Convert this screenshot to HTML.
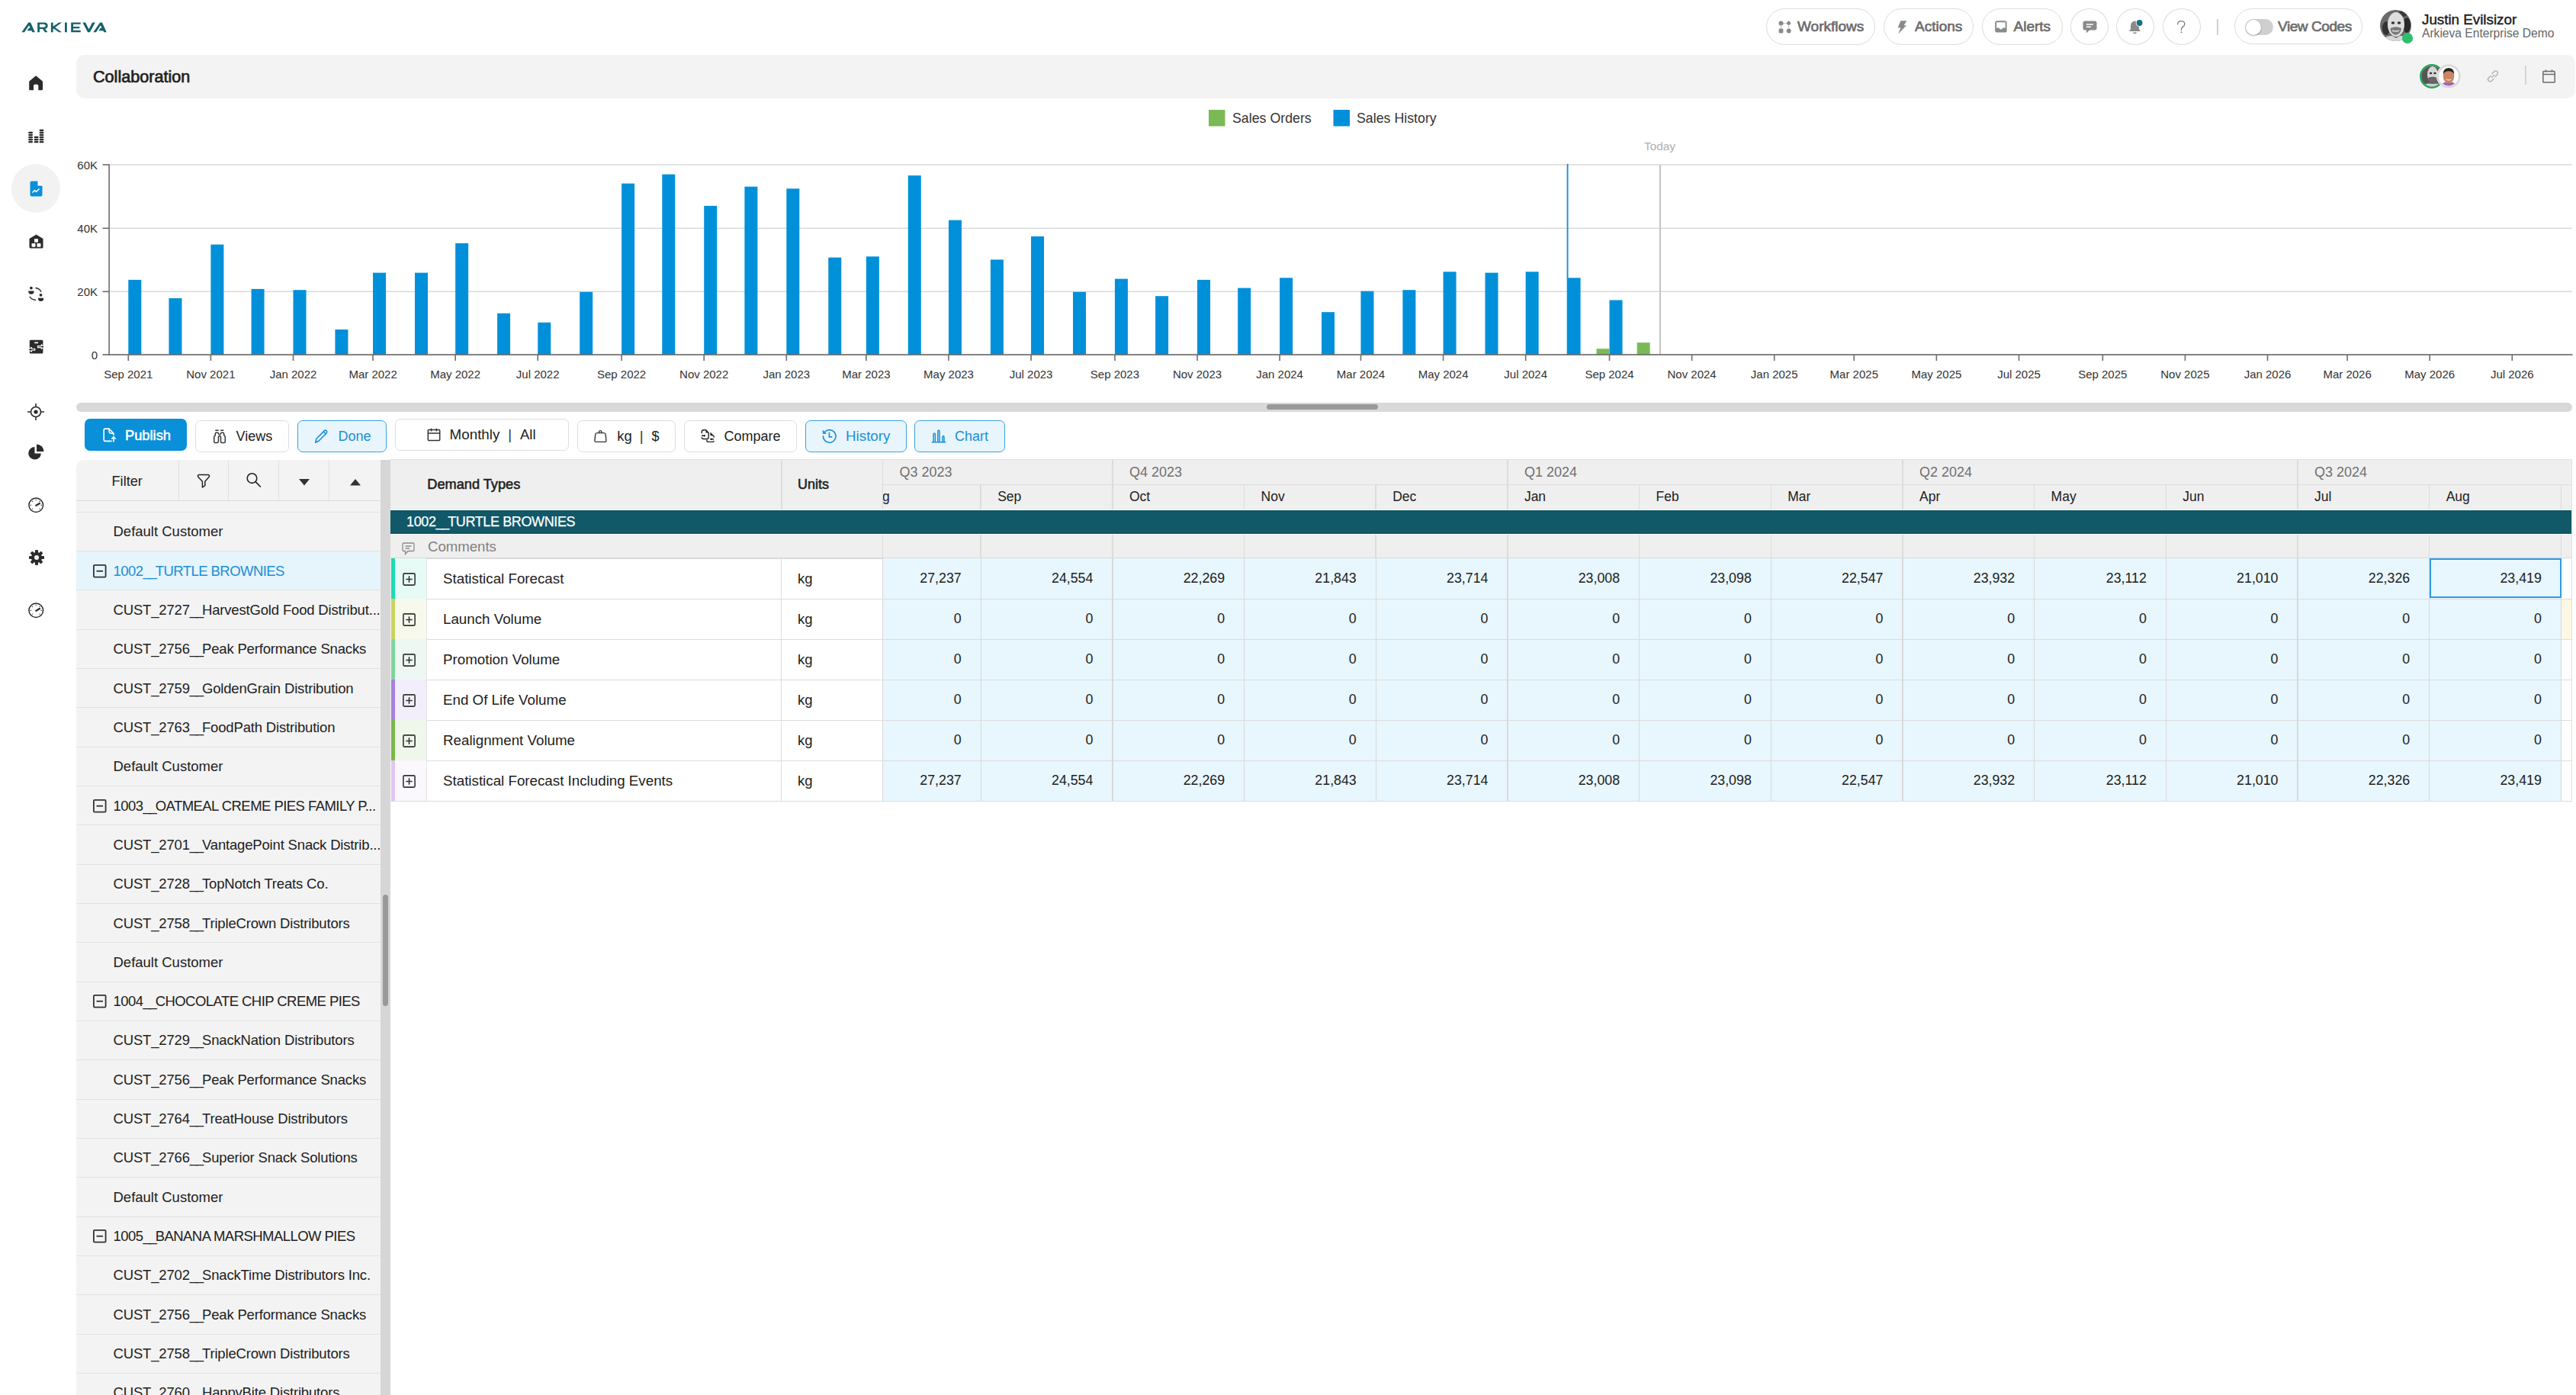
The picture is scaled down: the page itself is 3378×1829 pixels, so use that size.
<!DOCTYPE html><html><head><meta charset="utf-8"><style>
*{box-sizing:border-box;margin:0;padding:0}
html,body{width:3378px;height:1829px;overflow:hidden;background:#fff;font-family:"Liberation Sans",sans-serif;color:#212121}
.a{position:absolute}
.t{position:absolute;white-space:nowrap}
.pill{position:absolute;border:1.5px solid #dcdcdc;border-radius:26px;background:#fff}
.btn{position:absolute;border:1.5px solid #dedede;border-radius:7px;background:#fff}
.btnb{position:absolute;border:1.5px solid #3aa3e0;border-radius:7px;background:#e8f5fc}
svg{position:absolute;overflow:visible}
</style></head><body><svg style="left:24px;top:24px" width="120" height="24" viewBox="0 0 2576 515"><path d="M95 390 L285 118 L345 118 L470 390 L395 390 L300 200 L175 390 Z M245 350 L300 272 L340 272 L390 350 Z M540 118 H720 Q830 118 830 208 Q830 298 720 298 H600 V250 H720 Q768 250 768 208 Q768 168 720 168 H600 V390 H540 Z M680 292 L752 292 L825 390 L750 390 Z M920 118 H980 V390 H920 Z M978 232 L1145 118 L1225 118 L978 300 Z M1030 252 L1225 390 L1145 390 L985 282 Z M1310 118 H1370 V390 H1310 Z M1485 118 H1755 V168 H1545 V235 H1725 V285 H1545 V340 H1755 V390 H1485 Z M1810 118 L1890 118 L1985 305 L2085 118 L2165 118 L2015 390 L1955 390 Z M2110 390 L2300 118 L2360 118 L2485 390 L2410 390 L2315 200 L2190 390 Z M2260 350 L2315 272 L2355 272 L2405 350 Z" fill="#17606e"/></svg>
<div class="pill" style="left:2316px;top:11px;width:143px;height:48px"></div>
<div class="t" style="left:2357px;top:11px;height:48px;line-height:48px;font-size:19px;color:#6b6b6b;font-weight:400;-webkit-text-stroke:0.65px #6b6b6b">Workflows</div>
<div class="pill" style="left:2470px;top:11px;width:118px;height:48px"></div>
<div class="t" style="left:2511px;top:11px;height:48px;line-height:48px;font-size:19px;color:#6b6b6b;font-weight:400;-webkit-text-stroke:0.65px #6b6b6b">Actions</div>
<div class="pill" style="left:2599px;top:11px;width:106px;height:48px"></div>
<div class="t" style="left:2640.5px;top:11px;height:48px;line-height:48px;font-size:19px;color:#6b6b6b;font-weight:400;-webkit-text-stroke:0.65px #6b6b6b">Alerts</div>
<svg style="left:2332px;top:27px" width="17" height="17" viewBox="0 0 17 17"><circle cx="3.5" cy="3.5" r="3" fill="#8a8a8a"/><rect x="11.3" y="1.1" width="4.6" height="4.6" rx="1" transform="rotate(45 13.6 3.4)" fill="#8a8a8a"/><rect x="0.6" y="10.6" width="5.8" height="5.8" rx="1.3" fill="#8a8a8a"/><circle cx="13.7" cy="13.5" r="3" fill="#8a8a8a"/><path d="M7 3.5 H8 M9.3 3.5 H10.3 M3.5 7 V8 M3.5 9.2 V10.2 M13.7 7 V8 M13.7 9.2 V10.2" stroke="#8a8a8a" stroke-width="1"/></svg>
<svg style="left:2488px;top:26.5px" width="13" height="18" viewBox="0 0 13 18"><path d="M4.5 0.3 H12.3 L8.6 6.3 H12 L1.3 17.6 L4.5 9.2 H0.6 Z" fill="#8a8a8a"/></svg>
<svg style="left:2616px;top:27.3px" width="16" height="16" viewBox="0 0 16 16"><rect x="0.2" y="0.2" width="15.4" height="15.4" rx="2.6" fill="#8a8a8a"/><path d="M2.1 2.2 H13.7 V9.6 H10.4 Q9.8 11.6 7.9 11.6 Q6 11.6 5.4 9.6 H2.1 Z" fill="#fff"/></svg>
<div class="pill" style="left:2715px;top:11px;width:50px;height:48px;border-radius:50%"></div>
<div class="pill" style="left:2775px;top:11px;width:50px;height:48px;border-radius:50%"></div>
<div class="pill" style="left:2835.5px;top:11px;width:50px;height:48px;border-radius:50%"></div>
<svg style="left:2731px;top:27px" width="19" height="18" viewBox="0 0 19 18"><path d="M3 0.5 H16 Q18.5 0.5 18.5 3 V10 Q18.5 12.5 16 12.5 H9 L5 16.5 V12.5 H3 Q0.5 12.5 0.5 10 V3 Q0.5 0.5 3 0.5Z" fill="#8a8a8a"/><path d="M5 5 H14 M5 8.3 H11" stroke="#fff" stroke-width="1.5"/></svg>
<svg style="left:2790px;top:24px" width="22" height="22" viewBox="0 0 22 22"><path d="M9.5 3.5 Q4 4.5 4 10 V14 L2 17 H17 L15 14 V10 Q15 4.5 9.5 3.5Z" fill="#8a8a8a"/><path d="M7.5 18.5 Q9.5 20.5 11.5 18.5" stroke="#8a8a8a" stroke-width="1.5" fill="none"/><circle cx="15.6" cy="6" r="4.9" fill="#fff"/><circle cx="15.6" cy="6" r="3.9" fill="#17708a"/></svg>
<svg style="left:2853px;top:26px" width="15" height="20" viewBox="0 0 15 20"><path d="M2.6 5.8 Q2.6 1.6 7.3 1.6 Q11.8 1.6 11.8 5.5 Q11.8 7.6 9.6 9.1 Q7.5 10.5 7.5 12.8 V13.4" stroke="#7a7a7a" stroke-width="1.3" fill="none" stroke-linecap="round"/><circle cx="7.5" cy="16.3" r="1" fill="#7a7a7a"/></svg>
<div class="a" style="left:2907px;top:25px;width:1.5px;height:21px;background:#cfcfcf;"></div>
<div class="pill" style="left:2930px;top:11px;width:168px;height:47px"></div>
<div class="a" style="left:2944px;top:25px;width:37px;height:21px;border-radius:11px;background:#cfcfcf"></div>
<div class="a" style="left:2944.5px;top:25.5px;width:20px;height:20px;border-radius:50%;background:#fff;box-shadow:0 1px 2px rgba(0,0,0,.35)"></div>
<div class="t" style="left:2987px;top:11px;height:48px;line-height:48px;font-size:19px;color:#6b6b6b;font-weight:400;-webkit-text-stroke:0.65px #6b6b6b;letter-spacing:-0.42px">View Codes</div>
<svg style="left:3121px;top:13px" width="41" height="41" viewBox="0 0 41 41"><defs><clipPath id="avc"><circle cx="20.5" cy="20.5" r="20.5"/></clipPath></defs><g clip-path="url(#avc)"><rect width="41" height="41" fill="#6a6a6a"/><ellipse cx="8" cy="24" rx="5" ry="9" fill="#333"/><ellipse cx="35" cy="20" rx="5" ry="10" fill="#2a2a2a"/><ellipse cx="30" cy="5" rx="6" ry="4" fill="#3a3a3a"/><ellipse cx="21" cy="19" rx="11" ry="16" fill="#dedede"/><ellipse cx="17" cy="17" rx="2.3" ry="1.7" fill="#333"/><ellipse cx="25" cy="17" rx="2.3" ry="1.7" fill="#333"/><path d="M13.5 24 Q21 20.5 28 24 Q28 31 20.5 33 Q13.5 31 13.5 24Z" fill="#7a7a7a"/><path d="M16 27 Q21 29 25 27" stroke="#ddd" stroke-width="1.5" fill="none"/><path d="M3 41 Q7 33 16 34 L21 37 L26 34 Q34 33 38 41Z" fill="#d8d8d8"/></g></svg>
<div class="a" style="left:3150px;top:43.3px;width:13.6px;height:13.6px;border-radius:50%;background:#2ebf6e"></div>
<div class="t" style="left:3176px;top:12px;height:27px;line-height:27px;font-size:18.8px;color:#222;font-weight:400;-webkit-text-stroke:0.45px #222">Justin Evilsizor</div>
<div class="t" style="left:3176px;top:32px;height:24px;line-height:24px;font-size:15.6px;color:#666;font-weight:400;">Arkieva Enterprise Demo</div>
<svg style="left:38px;top:99px" width="19" height="20" viewBox="0 0 19 20"><path d="M9.1 0.3 L17.5 7.2 Q18 7.7 18 8.5 V18.3 Q18 19.3 17 19.3 H12.3 V13.5 Q12.3 11.6 9.1 11.6 Q6 11.6 6 13.5 V19.3 H1.2 Q0.2 19.3 0.2 18.3 V8.5 Q0.2 7.7 0.7 7.2 Z" fill="#2b2b2b"/></svg>
<svg style="left:37px;top:169px" width="21" height="19" viewBox="0 0 21 19" fill="#2b2b2b"><rect x="0.2" y="15.90" width="5.8" height="2.3" rx="1"/><rect x="0.2" y="12.86" width="5.8" height="2.3" rx="1"/><rect x="0.2" y="9.82" width="5.8" height="2.3" rx="1"/><rect x="0.2" y="6.78" width="5.8" height="2.3" rx="1"/><rect x="0.2" y="3.74" width="5.8" height="2.3" rx="1"/><rect x="7.7" y="15.90" width="5.8" height="2.3" rx="1"/><rect x="7.7" y="12.86" width="5.8" height="2.3" rx="1"/><rect x="7.7" y="9.82" width="5.8" height="2.3" rx="1"/><rect x="14.6" y="15.90" width="5.8" height="2.3" rx="1"/><rect x="14.6" y="12.86" width="5.8" height="2.3" rx="1"/><rect x="14.6" y="9.82" width="5.8" height="2.3" rx="1"/><rect x="14.6" y="6.78" width="5.8" height="2.3" rx="1"/><rect x="14.6" y="3.74" width="5.8" height="2.3" rx="1"/><rect x="14.6" y="0.70" width="5.8" height="2.3" rx="1"/></svg>
<div class="a" style="left:15px;top:215px;width:64px;height:64px;border-radius:50%;background:#f2f2f2"></div>
<svg style="left:39px;top:237px" width="17" height="21" viewBox="0 0 17 21"><path d="M2.5 0.5 H10 L16.5 7 V18.5 Q16.5 20.5 14.5 20.5 H2.5 Q0.5 20.5 0.5 18.5 V2.5 Q0.5 0.5 2.5 0.5Z" fill="#0a90da"/><path d="M10.5 0.5 V6.5 H16.5" fill="#fff"/><path d="M11 0 L17 6 H11Z" fill="#fff"/><path d="M3.5 15.5 L6.5 12.5 L8.5 14.5 L12.5 10.5" stroke="#fff" stroke-width="1.6" fill="none" stroke-linejoin="round"/></svg>
<svg style="left:38px;top:307px" width="19" height="19" viewBox="0 0 19 19"><path d="M9.5 0.5 L18.5 6 V17 Q18.5 18.5 17 18.5 H2 Q0.5 18.5 0.5 17 V6 Z" fill="#2b2b2b"/><rect x="7" y="6" width="5" height="4.8" rx="0.8" fill="#fff"/><rect x="3.5" y="12" width="5" height="4.8" rx="0.8" fill="#fff"/><rect x="10.5" y="12" width="5" height="4.8" rx="0.8" fill="#fff"/></svg>
<svg style="left:37px;top:376px" width="22" height="21" viewBox="0 0 22 21"><circle cx="3.9" cy="1.6" r="1.9" fill="#2b2b2b"/><path d="M0.2 5.5 H7.6 Q7.6 9.8 3.9 9.8 Q0.2 9.8 0.2 5.5Z" fill="#2b2b2b"/><circle cx="16.5" cy="10.8" r="1.9" fill="#2b2b2b"/><path d="M12.9 14.8 H20.3 Q20.3 19.1 16.6 19.1 Q12.9 19.1 12.9 14.8Z" fill="#2b2b2b"/><path d="M9.4 1.5 Q15 1.9 17 6.8 M2 12.8 Q4 17 10 17.4" stroke="#2b2b2b" stroke-width="1.5" fill="none"/></svg>
<svg style="left:35px;top:444px" width="25" height="21" viewBox="0 0 25 21"><rect x="3.8" y="1.7" width="17.6" height="17.7" rx="1.5" fill="#2b2b2b"/><rect x="10.2" y="4.5" width="4.8" height="1.7" fill="#fff"/><path d="M14.4 9.6 H19.3 V7.8 L23.3 10.6 L19.3 13.4 V11.6 H14.4 Z M10.8 13.3 H6.5 V11.5 L1.4 14.3 L6.5 17.1 V15.3 H10.8 Z" fill="#2b2b2b" stroke="#fff" stroke-width="1.1" stroke-linejoin="round"/></svg>
<svg style="left:35.5px;top:528.5px" width="22" height="22" viewBox="0 0 22 22"><circle cx="11" cy="11" r="6.5" stroke="#2b2b2b" stroke-width="1.6" fill="none"/><circle cx="11" cy="11" r="2.6" fill="#2b2b2b"/><path d="M11 0 V4.5 M11 17.5 V22 M0 11 H4.5 M17.5 11 H22" stroke="#2b2b2b" stroke-width="1.6"/></svg>
<svg style="left:37px;top:581.5px" width="21" height="21" viewBox="0 0 21 21"><path d="M8.5 4 A8.3 8.3 0 1 0 16.8 12.5 H8.5Z" fill="#2b2b2b"/><path d="M11 0.5 A9.5 9.5 0 0 1 20.5 10 H11Z" fill="#2b2b2b"/></svg>
<svg style="left:37px;top:651.5px" width="20.5" height="20.5" viewBox="0 0 20.5 20.5"><circle cx="10.25" cy="10.25" r="9.3" stroke="#2b2b2b" stroke-width="1.5" fill="none"/><path d="M10.25 10.8 L15 8" stroke="#2b2b2b" stroke-width="2.2" stroke-linecap="round"/><g fill="#2b2b2b"><circle cx="10.25" cy="3.4" r="0.7"/><circle cx="3.4" cy="10.25" r="0.7"/><circle cx="17.1" cy="10.25" r="0.7"/><circle cx="5.4" cy="5.4" r="0.7"/><circle cx="15.1" cy="5.4" r="0.7"/><circle cx="5.4" cy="15.1" r="0.7"/><circle cx="15.1" cy="15.1" r="0.7"/></g></svg>
<svg style="left:37px;top:790px" width="20.5" height="20.5" viewBox="0 0 20.5 20.5"><circle cx="10.25" cy="10.25" r="9.3" stroke="#2b2b2b" stroke-width="1.5" fill="none"/><path d="M10.25 10.8 L15 8" stroke="#2b2b2b" stroke-width="2.2" stroke-linecap="round"/><g fill="#2b2b2b"><circle cx="10.25" cy="3.4" r="0.7"/><circle cx="3.4" cy="10.25" r="0.7"/><circle cx="17.1" cy="10.25" r="0.7"/><circle cx="5.4" cy="5.4" r="0.7"/><circle cx="15.1" cy="5.4" r="0.7"/><circle cx="5.4" cy="15.1" r="0.7"/><circle cx="15.1" cy="15.1" r="0.7"/></g></svg>
<svg style="left:37.5px;top:721px" width="20" height="20" viewBox="0 0 20 20" fill="#2b2b2b"><rect x="8" y="0" width="4" height="5" rx="1" transform="rotate(0 10 10)"/><rect x="8" y="0" width="4" height="5" rx="1" transform="rotate(45 10 10)"/><rect x="8" y="0" width="4" height="5" rx="1" transform="rotate(90 10 10)"/><rect x="8" y="0" width="4" height="5" rx="1" transform="rotate(135 10 10)"/><rect x="8" y="0" width="4" height="5" rx="1" transform="rotate(180 10 10)"/><rect x="8" y="0" width="4" height="5" rx="1" transform="rotate(225 10 10)"/><rect x="8" y="0" width="4" height="5" rx="1" transform="rotate(270 10 10)"/><rect x="8" y="0" width="4" height="5" rx="1" transform="rotate(315 10 10)"/><circle cx="10" cy="10" r="7"/><circle cx="10" cy="10" r="3" fill="#fff"/></svg>
<div class="a" style="left:100px;top:72px;width:3277px;height:57px;border-radius:11px;background:#f3f3f3"></div>
<div class="t" style="left:122px;top:72px;height:57px;line-height:57px;font-size:21.6px;color:#212121;font-weight:400;-webkit-text-stroke:0.7px #212121">Collaboration</div>
<svg style="left:3170px;top:81px" width="60" height="38" viewBox="0 0 60 38"><defs><clipPath id="av1"><circle cx="19" cy="19" r="13.6"/></clipPath><clipPath id="av2"><circle cx="41" cy="19" r="12.5"/></clipPath></defs><circle cx="19" cy="19" r="16.5" fill="#fff"/><circle cx="19" cy="19" r="14.7" stroke="#1fa85a" stroke-width="2.6" fill="none"/><g clip-path="url(#av1)"><rect x="5" y="5" width="28" height="28" fill="#555"/><ellipse cx="20" cy="17" rx="7" ry="11" fill="#d6d6d6"/><ellipse cx="17.5" cy="15" rx="1.8" ry="1.3" fill="#333"/><ellipse cx="23" cy="15" rx="1.8" ry="1.3" fill="#333"/><path d="M14 21 Q20 18 26 21 Q26 28 20 29 Q14 28 14 21Z" fill="#666"/><path d="M6 33 Q10 27 20 29 Q29 27 33 33Z" fill="#cfcfcf"/></g><circle cx="41" cy="19" r="16" fill="#f3f3f3"/><circle cx="41" cy="19" r="14.3" stroke="#d8d8d8" stroke-width="2.5" fill="#fff"/><g clip-path="url(#av2)"><rect x="28" y="6" width="26" height="26" fill="#fff"/><path d="M29 34 Q31 26.5 41 26 Q51 26.5 53 34Z" fill="#9a62c8"/><ellipse cx="41" cy="19" rx="7.2" ry="9.3" fill="#c98660"/><path d="M33.8 17 Q33.3 8.3 41 8 Q48.7 8.3 48.2 17 Q47 12.2 41 12.2 Q35 12.2 33.8 17Z" fill="#2a2220"/><path d="M37.7 23 Q41 25 44.3 23" stroke="#f0d8d0" stroke-width="1.3" fill="none"/></g></svg>
<svg style="left:3260px;top:91px" width="18" height="18" viewBox="0 0 18 18"><path d="M7.5 10.5 L10.5 7.5 M6 8.5 L3.5 11 Q1.5 13 3.5 15 Q5.5 17 7.5 15 L10 12.5 M8 5.5 L10.5 3 Q12.5 1 14.5 3 Q16.5 5 14.5 7 L12 9.5" stroke="#b5b5b5" stroke-width="1.6" fill="none" stroke-linecap="round"/></svg>
<div class="a" style="left:3311px;top:86px;width:1.5px;height:25px;background:#d4d4d4;"></div>
<svg style="left:3334px;top:91px" width="17" height="18" viewBox="0 0 17 18"><rect x="0.8" y="2.5" width="15.4" height="14.5" rx="0.8" stroke="#6b6b6b" stroke-width="1.5" fill="none"/><path d="M0.8 6.5 H16.2 M4.5 0.5 V3.5 M12.5 0.5 V3.5" stroke="#6b6b6b" stroke-width="1.5"/></svg>
<svg style="left:0;top:0" width="3378" height="560" viewBox="0 0 3378 560"><rect x="143" y="215.25" width="3230" height="1.5" fill="#d9d9d9"/><rect x="143" y="298.55" width="3230" height="1.5" fill="#d9d9d9"/><rect x="143" y="381.55" width="3230" height="1.5" fill="#d9d9d9"/><rect x="2176" y="216" width="2" height="249" fill="#c4c4c4"/><rect x="168.30" y="366.9" width="17" height="98.1" fill="#0090da"/><rect x="221.46" y="391" width="17" height="74.0" fill="#0090da"/><rect x="276.40" y="320.6" width="17" height="144.4" fill="#0090da"/><rect x="329.56" y="378.9" width="17" height="86.1" fill="#0090da"/><rect x="384.50" y="380.2" width="17" height="84.8" fill="#0090da"/><rect x="439.43" y="432" width="17" height="33.0" fill="#0090da"/><rect x="489.05" y="357.6" width="17" height="107.4" fill="#0090da"/><rect x="543.99" y="357.6" width="17" height="107.4" fill="#0090da"/><rect x="597.15" y="318.9" width="17" height="146.1" fill="#0090da"/><rect x="652.08" y="410.8" width="17" height="54.2" fill="#0090da"/><rect x="705.25" y="422.8" width="17" height="42.2" fill="#0090da"/><rect x="760.18" y="382.8" width="17" height="82.2" fill="#0090da"/><rect x="815.12" y="240.6" width="17" height="224.4" fill="#0090da"/><rect x="868.28" y="228.6" width="17" height="236.4" fill="#0090da"/><rect x="923.21" y="269.9" width="17" height="195.1" fill="#0090da"/><rect x="976.38" y="244.7" width="17" height="220.3" fill="#0090da"/><rect x="1031.31" y="247.3" width="17" height="217.7" fill="#0090da"/><rect x="1086.25" y="337.6" width="17" height="127.4" fill="#0090da"/><rect x="1135.87" y="336.3" width="17" height="128.7" fill="#0090da"/><rect x="1190.80" y="230.1" width="17" height="234.9" fill="#0090da"/><rect x="1243.96" y="288.6" width="17" height="176.4" fill="#0090da"/><rect x="1298.90" y="340.4" width="17" height="124.6" fill="#0090da"/><rect x="1352.06" y="309.9" width="17" height="155.1" fill="#0090da"/><rect x="1407.00" y="382.8" width="17" height="82.2" fill="#0090da"/><rect x="1461.93" y="365.6" width="17" height="99.4" fill="#0090da"/><rect x="1515.10" y="388.2" width="17" height="76.8" fill="#0090da"/><rect x="1570.03" y="366.9" width="17" height="98.1" fill="#0090da"/><rect x="1623.19" y="377.6" width="17" height="87.4" fill="#0090da"/><rect x="1678.13" y="364.3" width="17" height="100.7" fill="#0090da"/><rect x="1733.06" y="409.2" width="17" height="55.8" fill="#0090da"/><rect x="1784.46" y="381.7" width="17" height="83.3" fill="#0090da"/><rect x="1839.39" y="380.2" width="17" height="84.8" fill="#0090da"/><rect x="1892.55" y="356.3" width="17" height="108.7" fill="#0090da"/><rect x="1947.49" y="357.6" width="17" height="107.4" fill="#0090da"/><rect x="2000.65" y="356.3" width="17" height="108.7" fill="#0090da"/><rect x="2055.59" y="364.3" width="17" height="100.7" fill="#0090da"/><rect x="2110.52" y="393.5" width="17" height="71.5" fill="#0090da"/><rect x="2093.52" y="457.2" width="17" height="7.8" fill="#7aba55"/><rect x="2146.68" y="449.2" width="17" height="15.8" fill="#7aba55"/><rect x="2054.69" y="215" width="1.8" height="251" fill="#0a90da"/><rect x="142.3" y="215.5" width="1.6" height="250" fill="#6e6e6e"/><rect x="134.5" y="464.2" width="3239" height="1.7" fill="#6e6e6e"/><rect x="134.5" y="215.2" width="9" height="1.6" fill="#6e6e6e"/><rect x="134.5" y="298.5" width="9" height="1.6" fill="#6e6e6e"/><rect x="134.5" y="381.5" width="9" height="1.6" fill="#6e6e6e"/><text x="128" y="221.5" text-anchor="end" font-family="Liberation Sans" font-size="15" fill="#333">60K</text><text x="128" y="304.8" text-anchor="end" font-family="Liberation Sans" font-size="15" fill="#333">40K</text><text x="128" y="387.8" text-anchor="end" font-family="Liberation Sans" font-size="15" fill="#333">20K</text><text x="128" y="470.5" text-anchor="end" font-family="Liberation Sans" font-size="15" fill="#333">0</text><rect x="167.50" y="465" width="1.6" height="8" fill="#6e6e6e"/><text x="168.3" y="495.5" text-anchor="middle" font-family="Liberation Sans" font-size="15" fill="#333">Sep 2021</text><rect x="275.60" y="465" width="1.6" height="8" fill="#6e6e6e"/><text x="276.4" y="495.5" text-anchor="middle" font-family="Liberation Sans" font-size="15" fill="#333">Nov 2021</text><rect x="383.70" y="465" width="1.6" height="8" fill="#6e6e6e"/><text x="384.5" y="495.5" text-anchor="middle" font-family="Liberation Sans" font-size="15" fill="#333">Jan 2022</text><rect x="488.25" y="465" width="1.6" height="8" fill="#6e6e6e"/><text x="489.1" y="495.5" text-anchor="middle" font-family="Liberation Sans" font-size="15" fill="#333">Mar 2022</text><rect x="596.35" y="465" width="1.6" height="8" fill="#6e6e6e"/><text x="597.1" y="495.5" text-anchor="middle" font-family="Liberation Sans" font-size="15" fill="#333">May 2022</text><rect x="704.45" y="465" width="1.6" height="8" fill="#6e6e6e"/><text x="705.2" y="495.5" text-anchor="middle" font-family="Liberation Sans" font-size="15" fill="#333">Jul 2022</text><rect x="814.32" y="465" width="1.6" height="8" fill="#6e6e6e"/><text x="815.1" y="495.5" text-anchor="middle" font-family="Liberation Sans" font-size="15" fill="#333">Sep 2022</text><rect x="922.41" y="465" width="1.6" height="8" fill="#6e6e6e"/><text x="923.2" y="495.5" text-anchor="middle" font-family="Liberation Sans" font-size="15" fill="#333">Nov 2022</text><rect x="1030.51" y="465" width="1.6" height="8" fill="#6e6e6e"/><text x="1031.3" y="495.5" text-anchor="middle" font-family="Liberation Sans" font-size="15" fill="#333">Jan 2023</text><rect x="1135.07" y="465" width="1.6" height="8" fill="#6e6e6e"/><text x="1135.9" y="495.5" text-anchor="middle" font-family="Liberation Sans" font-size="15" fill="#333">Mar 2023</text><rect x="1243.16" y="465" width="1.6" height="8" fill="#6e6e6e"/><text x="1244.0" y="495.5" text-anchor="middle" font-family="Liberation Sans" font-size="15" fill="#333">May 2023</text><rect x="1351.26" y="465" width="1.6" height="8" fill="#6e6e6e"/><text x="1352.1" y="495.5" text-anchor="middle" font-family="Liberation Sans" font-size="15" fill="#333">Jul 2023</text><rect x="1461.13" y="465" width="1.6" height="8" fill="#6e6e6e"/><text x="1461.9" y="495.5" text-anchor="middle" font-family="Liberation Sans" font-size="15" fill="#333">Sep 2023</text><rect x="1569.23" y="465" width="1.6" height="8" fill="#6e6e6e"/><text x="1570.0" y="495.5" text-anchor="middle" font-family="Liberation Sans" font-size="15" fill="#333">Nov 2023</text><rect x="1677.33" y="465" width="1.6" height="8" fill="#6e6e6e"/><text x="1678.1" y="495.5" text-anchor="middle" font-family="Liberation Sans" font-size="15" fill="#333">Jan 2024</text><rect x="1783.66" y="465" width="1.6" height="8" fill="#6e6e6e"/><text x="1784.5" y="495.5" text-anchor="middle" font-family="Liberation Sans" font-size="15" fill="#333">Mar 2024</text><rect x="1891.75" y="465" width="1.6" height="8" fill="#6e6e6e"/><text x="1892.6" y="495.5" text-anchor="middle" font-family="Liberation Sans" font-size="15" fill="#333">May 2024</text><rect x="1999.85" y="465" width="1.6" height="8" fill="#6e6e6e"/><text x="2000.7" y="495.5" text-anchor="middle" font-family="Liberation Sans" font-size="15" fill="#333">Jul 2024</text><rect x="2109.72" y="465" width="1.6" height="8" fill="#6e6e6e"/><text x="2110.5" y="495.5" text-anchor="middle" font-family="Liberation Sans" font-size="15" fill="#333">Sep 2024</text><rect x="2217.82" y="465" width="1.6" height="8" fill="#6e6e6e"/><text x="2218.6" y="495.5" text-anchor="middle" font-family="Liberation Sans" font-size="15" fill="#333">Nov 2024</text><rect x="2325.92" y="465" width="1.6" height="8" fill="#6e6e6e"/><text x="2326.7" y="495.5" text-anchor="middle" font-family="Liberation Sans" font-size="15" fill="#333">Jan 2025</text><rect x="2430.47" y="465" width="1.6" height="8" fill="#6e6e6e"/><text x="2431.3" y="495.5" text-anchor="middle" font-family="Liberation Sans" font-size="15" fill="#333">Mar 2025</text><rect x="2538.57" y="465" width="1.6" height="8" fill="#6e6e6e"/><text x="2539.4" y="495.5" text-anchor="middle" font-family="Liberation Sans" font-size="15" fill="#333">May 2025</text><rect x="2646.67" y="465" width="1.6" height="8" fill="#6e6e6e"/><text x="2647.5" y="495.5" text-anchor="middle" font-family="Liberation Sans" font-size="15" fill="#333">Jul 2025</text><rect x="2756.54" y="465" width="1.6" height="8" fill="#6e6e6e"/><text x="2757.3" y="495.5" text-anchor="middle" font-family="Liberation Sans" font-size="15" fill="#333">Sep 2025</text><rect x="2864.64" y="465" width="1.6" height="8" fill="#6e6e6e"/><text x="2865.4" y="495.5" text-anchor="middle" font-family="Liberation Sans" font-size="15" fill="#333">Nov 2025</text><rect x="2972.73" y="465" width="1.6" height="8" fill="#6e6e6e"/><text x="2973.5" y="495.5" text-anchor="middle" font-family="Liberation Sans" font-size="15" fill="#333">Jan 2026</text><rect x="3077.29" y="465" width="1.6" height="8" fill="#6e6e6e"/><text x="3078.1" y="495.5" text-anchor="middle" font-family="Liberation Sans" font-size="15" fill="#333">Mar 2026</text><rect x="3185.39" y="465" width="1.6" height="8" fill="#6e6e6e"/><text x="3186.2" y="495.5" text-anchor="middle" font-family="Liberation Sans" font-size="15" fill="#333">May 2026</text><rect x="3293.48" y="465" width="1.6" height="8" fill="#6e6e6e"/><text x="3294.3" y="495.5" text-anchor="middle" font-family="Liberation Sans" font-size="15" fill="#333">Jul 2026</text><rect x="1585" y="144" width="21.5" height="21.5" fill="#7aba55"/><text x="1616" y="161.3" font-family="Liberation Sans" font-size="17.8" fill="#333">Sales Orders</text><rect x="1748.5" y="144" width="21.5" height="21.5" fill="#0090da"/><text x="1779" y="161.3" font-family="Liberation Sans" font-size="17.8" fill="#333">Sales History</text><text x="2176.5" y="196.5" text-anchor="middle" font-family="Liberation Sans" font-size="15.4" fill="#b0b0b0">Today</text></svg>
<div class="a" style="left:100px;top:528px;width:3273px;height:12px;background:#d9d9d9;border-radius:6px"></div>
<div class="a" style="left:1660.5px;top:530.3px;width:146px;height:6.8px;background:#999;border-radius:3.4px"></div>
<div class="a" style="left:111px;top:549px;width:134px;height:42px;border-radius:7px;background:#0a8fd9"></div>
<svg style="left:127px;top:554px" width="32" height="32" viewBox="0 0 32 32"><path d="M19.7 24.4 H11.2 Q9.2 24.4 9.2 22.4 V10.1 Q9.2 8.1 11.2 8.1 H16 L22 14.2 V16.8 M16 8.3 V11 Q16 14.3 19.3 14.3 H21.8" stroke="#fff" stroke-width="1.6" fill="none" stroke-linejoin="round"/><path d="M22 25.5 V19.8 M19.3 21.5 L22 18.7 L24.7 21.5" stroke="#fff" stroke-width="1.7" fill="none"/></svg>
<div class="t" style="left:164px;top:550.2px;height:42px;line-height:42px;font-size:18.3px;color:#fff;font-weight:400;-webkit-text-stroke:0.5px #fff">Publish</div>
<div class="btn" style="left:256px;top:551px;width:122.5px;height:42px"></div>
<svg style="left:272px;top:556px" width="32" height="32" viewBox="0 0 32 32"><path d="M10.3 8.3 H14.7 M17.1 8.3 H21.3" stroke="#333" stroke-width="1.5"/><path d="M8.7 23 V17 Q8.7 15.8 10.3 14.6 V12.6 Q10.3 11.2 12 11.2 H13 Q14.3 11.2 14.6 12.5 Q15 13.6 16 13.6 Q17 13.6 17.4 12.5 Q17.7 11.2 19 11.2 H20 Q21.7 11.2 21.7 12.6 V14.6 Q23.3 15.8 23.3 17 V23 Q23.3 24.4 22 24.4 H18.8 Q17.5 24.4 17.5 23 V17 Q17.5 15.6 16 15.6 Q14.4 15.6 14.4 17 V23 Q14.4 24.4 13.1 24.4 H10 Q8.7 24.4 8.7 23 Z" stroke="#333" stroke-width="1.5" fill="none"/></svg>
<div class="t" style="left:309.5px;top:551px;height:42px;line-height:42px;font-size:18px;color:#212121;font-weight:400;">Views</div>
<div class="btnb" style="left:390px;top:551px;width:116.5px;height:42px"></div>
<svg style="left:405px;top:556px" width="32" height="32" viewBox="0 0 32 32"><path d="M8.7 24.2 L9.9 19.2 L20.2 8.9 Q21.7 7.5 23.2 8.8 Q24.6 10.3 23.3 11.8 L13.1 22 Z M19.3 10 L22.2 12.9" stroke="#1a8fd6" stroke-width="1.6" fill="none" stroke-linejoin="round"/></svg>
<div class="t" style="left:443.5px;top:551px;height:42px;line-height:42px;font-size:18px;color:#1a8fd6;font-weight:400;">Done</div>
<div class="btn" style="left:517.5px;top:549px;width:228px;height:42px"></div>
<svg style="left:553px;top:554px" width="32" height="32" viewBox="0 0 32 32"><rect x="8.3" y="9.6" width="15.4" height="13.8" rx="0.8" stroke="#333" stroke-width="1.5" fill="none"/><path d="M8.3 14 H23.7 M12.5 7.8 V11.5 M19.4 7.8 V11.5" stroke="#333" stroke-width="1.5"/></svg>
<div class="t" style="left:589.6px;top:549px;height:42px;line-height:42px;font-size:18.8px;color:#212121;font-weight:400;">Monthly</div>
<div class="t" style="left:666.3px;top:549px;height:42px;line-height:42px;font-size:18.5px;color:#333;font-weight:400;">|</div>
<div class="t" style="left:682px;top:549px;height:42px;line-height:42px;font-size:18.5px;color:#212121;font-weight:400;">All</div>
<div class="btn" style="left:756.5px;top:551px;width:129px;height:42px"></div>
<svg style="left:771px;top:556px" width="32" height="32" viewBox="0 0 32 32"><path d="M12 11.6 H21 Q22.9 11.6 23.1 13.5 L23.9 21.5 Q24 23.4 22.1 23.4 H10.7 Q8.7 23.4 8.9 21.4 L9.8 13.5 Q10 11.6 12 11.6 Z M14.6 11.6 V10.6 Q14.6 8.6 16.2 8.6 Q17.8 8.6 17.8 10.6 V11.6" stroke="#333" stroke-width="1.4" fill="none"/></svg>
<div class="t" style="left:809.3px;top:551px;height:42px;line-height:42px;font-size:18.5px;color:#212121;font-weight:400;">kg</div>
<div class="t" style="left:838.8px;top:551px;height:42px;line-height:42px;font-size:18.5px;color:#333;font-weight:400;">|</div>
<div class="t" style="left:854.5px;top:551px;height:42px;line-height:42px;font-size:18px;color:#212121;font-weight:400;">$</div>
<div class="btn" style="left:896.5px;top:551px;width:148px;height:42px"></div>
<svg style="left:912px;top:556px" width="32" height="32" viewBox="0 0 32 32"><path d="M8.3 12.3 V10 Q8.3 7.8 10.5 7.8 H13.6 L17.2 11.5 V17.3 Q17.2 19.5 15 19.5 H10.5 Q8.3 19.5 8.3 17.3 V17.2" stroke="#222" stroke-width="1.4" fill="none"/><path d="M13.5 8 V11.6 H17.1 Z M19.5 11.5 V15.3 H23.4 Z" fill="#222"/><path d="M19.5 11.5 L24.3 16.2 V17.5 M24.3 22 Q24 23.4 22 23.4 H17 Q14.9 23.4 14.9 21.2 V20.5 M8 15.2 H12 M20.2 19.7 H24" stroke="#222" stroke-width="1.4" fill="none"/><circle cx="11.8" cy="15.2" r="1.2" fill="#222"/><circle cx="20.4" cy="19.7" r="1.2" fill="#222"/></svg>
<div class="t" style="left:949.5px;top:551px;height:42px;line-height:42px;font-size:18px;color:#212121;font-weight:400;">Compare</div>
<div class="btnb" style="left:1055.5px;top:551px;width:133px;height:42px"></div>
<svg style="left:1071px;top:556px" width="32" height="32" viewBox="0 0 32 32"><path d="M8.4 15.8 A8.3 8.3 0 1 0 10.9 10" stroke="#1a8fd6" stroke-width="1.6" fill="none" stroke-linecap="round"/><path d="M8 8.3 L8.4 12.6 L12.4 12.4 Z" fill="#1a8fd6" stroke="#1a8fd6" stroke-width="0.8" stroke-linejoin="round"/><path d="M16.4 11.4 V16.9 H19.7" stroke="#1a8fd6" stroke-width="1.6" fill="none" stroke-linecap="round"/></svg>
<div class="t" style="left:1109px;top:551px;height:42px;line-height:42px;font-size:18.8px;color:#1a8fd6;font-weight:400;">History</div>
<div class="btnb" style="left:1199px;top:551px;width:118.5px;height:42px"></div>
<svg style="left:1214px;top:556px" width="32" height="32" viewBox="0 0 32 32"><path d="M8.3 23.7 H25.7" stroke="#1a8fd6" stroke-width="1.6" stroke-linecap="round"/><path d="M10.1 23.5 V13.8 Q10.1 12 11.25 12 Q12.4 12 12.4 13.8 V23.5 M15.8 23.5 V9.9 Q15.8 8.1 16.95 8.1 Q18.1 8.1 18.1 9.9 V23.5 M21.8 23.5 V17.3 Q21.8 15.5 22.9 15.5 Q24 15.5 24 17.3 V23.5" stroke="#1a8fd6" stroke-width="1.5" fill="none"/></svg>
<div class="t" style="left:1252px;top:551px;height:42px;line-height:42px;font-size:18px;color:#1a8fd6;font-weight:400;">Chart</div>
<div class="a" style="left:100px;top:602.5px;width:398.5px;height:1240px;background:#f3f3f3;border-top-left-radius:11px"></div>
<div class="a" style="left:498.5px;top:602.5px;width:13.5px;height:1240px;background:#d6d6d6;"></div>
<div class="a" style="left:501.5px;top:1173.3px;width:7.8px;height:145.5px;background:#999;border-radius:4px"></div>
<div class="a" style="left:100px;top:655.5px;width:398.5px;height:1.2px;background:#dcdcdc;"></div>
<div class="a" style="left:233.6px;top:603px;width:1.2px;height:53px;background:#e0e0e0;"></div>
<div class="a" style="left:299.3px;top:603px;width:1.2px;height:53px;background:#e0e0e0;"></div>
<div class="a" style="left:365.3px;top:603px;width:1.2px;height:53px;background:#e0e0e0;"></div>
<div class="a" style="left:431.3px;top:603px;width:1.2px;height:53px;background:#e0e0e0;"></div>
<div class="t" style="left:146.5px;top:605px;height:53px;line-height:53px;font-size:18.2px;color:#212121;font-weight:400;">Filter</div>
<svg style="left:250px;top:613px" width="32" height="32" viewBox="0 0 32 32"><path d="M10.9 9.6 H23 Q25.4 9.9 24 12.5 L18.8 18.3 V23.6 L15.4 26 V18.3 L10 12.5 Q8.6 9.9 10.9 9.6 Z" stroke="#222" stroke-width="1.5" fill="none" stroke-linejoin="round"/></svg>
<svg style="left:317px;top:613px" width="32" height="32" viewBox="0 0 32 32"><circle cx="13.5" cy="14.1" r="6.3" stroke="#222" stroke-width="1.6" fill="none"/><path d="M18.3 18.9 L24.4 25" stroke="#222" stroke-width="1.7" stroke-linecap="round"/></svg>
<svg style="left:391.5px;top:628px" width="14" height="9" viewBox="0 0 14 9"><path d="M0 0 H14 L7 8.5Z" fill="#333"/></svg>
<svg style="left:458.5px;top:627.5px" width="14" height="9" viewBox="0 0 14 9"><path d="M0 8.5 H14 L7 0Z" fill="#333"/></svg>
<div class="a" style="left:100px;top:670.7px;width:398.5px;height:1.1px;background:#e2e2e2;"></div>
<div class="a" style="left:100px;top:722.0300000000001px;width:398.5px;height:1.1px;background:#e2e2e2;"></div>
<div class="a" style="left:100px;top:723.0300000000001px;width:398.5px;height:50.33px;background:#e6f4fc;"></div>
<div class="a" style="left:100px;top:773.3600000000001px;width:398.5px;height:1.1px;background:#e2e2e2;"></div>
<div class="a" style="left:100px;top:824.69px;width:398.5px;height:1.1px;background:#e2e2e2;"></div>
<div class="a" style="left:100px;top:876.0200000000001px;width:398.5px;height:1.1px;background:#e2e2e2;"></div>
<div class="a" style="left:100px;top:927.35px;width:398.5px;height:1.1px;background:#e2e2e2;"></div>
<div class="a" style="left:100px;top:978.6800000000001px;width:398.5px;height:1.1px;background:#e2e2e2;"></div>
<div class="a" style="left:100px;top:1030.01px;width:398.5px;height:1.1px;background:#e2e2e2;"></div>
<div class="a" style="left:100px;top:1081.34px;width:398.5px;height:1.1px;background:#e2e2e2;"></div>
<div class="a" style="left:100px;top:1132.67px;width:398.5px;height:1.1px;background:#e2e2e2;"></div>
<div class="a" style="left:100px;top:1184.0px;width:398.5px;height:1.1px;background:#e2e2e2;"></div>
<div class="a" style="left:100px;top:1235.33px;width:398.5px;height:1.1px;background:#e2e2e2;"></div>
<div class="a" style="left:100px;top:1286.6599999999999px;width:398.5px;height:1.1px;background:#e2e2e2;"></div>
<div class="a" style="left:100px;top:1337.99px;width:398.5px;height:1.1px;background:#e2e2e2;"></div>
<div class="a" style="left:100px;top:1389.32px;width:398.5px;height:1.1px;background:#e2e2e2;"></div>
<div class="a" style="left:100px;top:1440.65px;width:398.5px;height:1.1px;background:#e2e2e2;"></div>
<div class="a" style="left:100px;top:1491.98px;width:398.5px;height:1.1px;background:#e2e2e2;"></div>
<div class="a" style="left:100px;top:1543.31px;width:398.5px;height:1.1px;background:#e2e2e2;"></div>
<div class="a" style="left:100px;top:1594.6399999999999px;width:398.5px;height:1.1px;background:#e2e2e2;"></div>
<div class="a" style="left:100px;top:1645.9699999999998px;width:398.5px;height:1.1px;background:#e2e2e2;"></div>
<div class="a" style="left:100px;top:1697.3px;width:398.5px;height:1.1px;background:#e2e2e2;"></div>
<div class="a" style="left:100px;top:1748.6299999999999px;width:398.5px;height:1.1px;background:#e2e2e2;"></div>
<div class="a" style="left:100px;top:1799.96px;width:398.5px;height:1.1px;background:#e2e2e2;"></div>
<div class="a" style="left:100px;top:1851.29px;width:398.5px;height:1.1px;background:#e2e2e2;"></div>
<div class="a" style="left:100px;top:656px;width:398px;height:1180px;overflow:hidden">
<div class="t" style="left:48.5px;top:15.20px;height:51.33px;line-height:51.33px;font-size:18.5px;color:#212121;letter-spacing:0px">Default Customer</div>
<div class="t" style="left:48.5px;top:66.53px;height:51.33px;line-height:51.33px;font-size:18.5px;color:#1a8fd6;letter-spacing:-0.55px">1002<span style="letter-spacing:-2.2px">__</span>&#8203;TURTLE BROWNIES</div>
<svg style="left:22px;top:83.7px" width="17.5" height="17.5" viewBox="0 0 17.5 17.5"><rect x="0.9" y="0.9" width="15.7" height="15.7" rx="1.2" stroke="#333" stroke-width="1.8" fill="none"/><path d="M4.5 8.75 H13" stroke="#333" stroke-width="1.8"/></svg>
<div class="t" style="left:48.5px;top:117.86px;height:51.33px;line-height:51.33px;font-size:18.5px;color:#212121;letter-spacing:-0.17px">CUST_2727<span style="letter-spacing:-2.2px">__</span>&#8203;HarvestGold Food Distribut...</div>
<div class="t" style="left:48.5px;top:169.19px;height:51.33px;line-height:51.33px;font-size:18.5px;color:#212121;letter-spacing:-0.17px">CUST_2756<span style="letter-spacing:-2.2px">__</span>&#8203;Peak Performance Snacks</div>
<div class="t" style="left:48.5px;top:220.52px;height:51.33px;line-height:51.33px;font-size:18.5px;color:#212121;letter-spacing:-0.17px">CUST_2759<span style="letter-spacing:-2.2px">__</span>&#8203;GoldenGrain Distribution</div>
<div class="t" style="left:48.5px;top:271.85px;height:51.33px;line-height:51.33px;font-size:18.5px;color:#212121;letter-spacing:-0.17px">CUST_2763<span style="letter-spacing:-2.2px">__</span>&#8203;FoodPath Distribution</div>
<div class="t" style="left:48.5px;top:323.18px;height:51.33px;line-height:51.33px;font-size:18.5px;color:#212121;letter-spacing:0px">Default Customer</div>
<div class="t" style="left:48.5px;top:374.51px;height:51.33px;line-height:51.33px;font-size:18.5px;color:#212121;letter-spacing:-0.55px">1003<span style="letter-spacing:-2.2px">__</span>&#8203;OATMEAL CREME PIES FAMILY P...</div>
<svg style="left:22px;top:391.7px" width="17.5" height="17.5" viewBox="0 0 17.5 17.5"><rect x="0.9" y="0.9" width="15.7" height="15.7" rx="1.2" stroke="#333" stroke-width="1.8" fill="none"/><path d="M4.5 8.75 H13" stroke="#333" stroke-width="1.8"/></svg>
<div class="t" style="left:48.5px;top:425.84px;height:51.33px;line-height:51.33px;font-size:18.5px;color:#212121;letter-spacing:-0.17px">CUST_2701<span style="letter-spacing:-2.2px">__</span>&#8203;VantagePoint Snack Distrib...</div>
<div class="t" style="left:48.5px;top:477.17px;height:51.33px;line-height:51.33px;font-size:18.5px;color:#212121;letter-spacing:-0.17px">CUST_2728<span style="letter-spacing:-2.2px">__</span>&#8203;TopNotch Treats Co.</div>
<div class="t" style="left:48.5px;top:528.50px;height:51.33px;line-height:51.33px;font-size:18.5px;color:#212121;letter-spacing:-0.17px">CUST_2758<span style="letter-spacing:-2.2px">__</span>&#8203;TripleCrown Distributors</div>
<div class="t" style="left:48.5px;top:579.83px;height:51.33px;line-height:51.33px;font-size:18.5px;color:#212121;letter-spacing:0px">Default Customer</div>
<div class="t" style="left:48.5px;top:631.16px;height:51.33px;line-height:51.33px;font-size:18.5px;color:#212121;letter-spacing:-0.55px">1004<span style="letter-spacing:-2.2px">__</span>&#8203;CHOCOLATE CHIP CREME PIES</div>
<svg style="left:22px;top:648.3px" width="17.5" height="17.5" viewBox="0 0 17.5 17.5"><rect x="0.9" y="0.9" width="15.7" height="15.7" rx="1.2" stroke="#333" stroke-width="1.8" fill="none"/><path d="M4.5 8.75 H13" stroke="#333" stroke-width="1.8"/></svg>
<div class="t" style="left:48.5px;top:682.49px;height:51.33px;line-height:51.33px;font-size:18.5px;color:#212121;letter-spacing:-0.17px">CUST_2729<span style="letter-spacing:-2.2px">__</span>&#8203;SnackNation Distributors</div>
<div class="t" style="left:48.5px;top:733.82px;height:51.33px;line-height:51.33px;font-size:18.5px;color:#212121;letter-spacing:-0.17px">CUST_2756<span style="letter-spacing:-2.2px">__</span>&#8203;Peak Performance Snacks</div>
<div class="t" style="left:48.5px;top:785.15px;height:51.33px;line-height:51.33px;font-size:18.5px;color:#212121;letter-spacing:-0.17px">CUST_2764<span style="letter-spacing:-2.2px">__</span>&#8203;TreatHouse Distributors</div>
<div class="t" style="left:48.5px;top:836.48px;height:51.33px;line-height:51.33px;font-size:18.5px;color:#212121;letter-spacing:-0.17px">CUST_2766<span style="letter-spacing:-2.2px">__</span>&#8203;Superior Snack Solutions</div>
<div class="t" style="left:48.5px;top:887.81px;height:51.33px;line-height:51.33px;font-size:18.5px;color:#212121;letter-spacing:0px">Default Customer</div>
<div class="t" style="left:48.5px;top:939.14px;height:51.33px;line-height:51.33px;font-size:18.5px;color:#212121;letter-spacing:-0.55px">1005<span style="letter-spacing:-2.2px">__</span>&#8203;BANANA MARSHMALLOW PIES</div>
<svg style="left:22px;top:956.3px" width="17.5" height="17.5" viewBox="0 0 17.5 17.5"><rect x="0.9" y="0.9" width="15.7" height="15.7" rx="1.2" stroke="#333" stroke-width="1.8" fill="none"/><path d="M4.5 8.75 H13" stroke="#333" stroke-width="1.8"/></svg>
<div class="t" style="left:48.5px;top:990.47px;height:51.33px;line-height:51.33px;font-size:18.5px;color:#212121;letter-spacing:-0.17px">CUST_2702<span style="letter-spacing:-2.2px">__</span>&#8203;SnackTime Distributors Inc.</div>
<div class="t" style="left:48.5px;top:1041.80px;height:51.33px;line-height:51.33px;font-size:18.5px;color:#212121;letter-spacing:-0.17px">CUST_2756<span style="letter-spacing:-2.2px">__</span>&#8203;Peak Performance Snacks</div>
<div class="t" style="left:48.5px;top:1093.13px;height:51.33px;line-height:51.33px;font-size:18.5px;color:#212121;letter-spacing:-0.17px">CUST_2758<span style="letter-spacing:-2.2px">__</span>&#8203;TripleCrown Distributors</div>
<div class="t" style="left:48.5px;top:1144.46px;height:51.33px;line-height:51.33px;font-size:18.5px;color:#212121;letter-spacing:-0.17px">CUST_2760<span style="letter-spacing:-2.2px">__</span>&#8203;HappyBite Distributors</div>
</div>
<div class="a" style="left:512px;top:602.5px;width:2860.5px;height:65.5px;background:#efefef;"></div>
<div class="a" style="left:512px;top:602px;width:2860.5px;height:1.2px;background:#e2e2e2;"></div>
<div class="t" style="left:560.3px;top:602.5px;height:65.5px;line-height:65.5px;font-size:18.2px;color:#212121;font-weight:400;-webkit-text-stroke:0.55px #212121">Demand Types</div>
<div class="t" style="left:1046px;top:602.5px;height:65.5px;line-height:65.5px;font-size:18px;color:#212121;font-weight:400;-webkit-text-stroke:0.55px #212121">Units</div>
<div class="a" style="left:1024px;top:602.5px;width:1.5px;height:65.5px;background:#dcdcdc;"></div>
<div class="a" style="left:1156.5px;top:602.5px;width:1.5px;height:65.5px;background:#dcdcdc;"></div>
<div class="a" style="left:1157.5px;top:634.5px;width:2215.0px;height:1.5px;background:#dcdcdc;"></div>
<div class="t" style="left:1179.5px;top:603.2px;height:32.5px;line-height:32.5px;font-size:18px;color:#707070;font-weight:400;">Q3 2023</div>
<div class="a" style="left:1458.13px;top:602.5px;width:1.5px;height:32.5px;background:#dcdcdc;"></div>
<div class="t" style="left:1480.88px;top:603.2px;height:32.5px;line-height:32.5px;font-size:18px;color:#707070;font-weight:400;">Q4 2023</div>
<div class="a" style="left:1976.17px;top:602.5px;width:1.5px;height:32.5px;background:#dcdcdc;"></div>
<div class="t" style="left:1998.92px;top:603.2px;height:32.5px;line-height:32.5px;font-size:18px;color:#707070;font-weight:400;">Q1 2024</div>
<div class="a" style="left:2494.21px;top:602.5px;width:1.5px;height:32.5px;background:#dcdcdc;"></div>
<div class="t" style="left:2516.96px;top:603.2px;height:32.5px;line-height:32.5px;font-size:18px;color:#707070;font-weight:400;">Q2 2024</div>
<div class="a" style="left:3012.25px;top:602.5px;width:1.5px;height:32.5px;background:#dcdcdc;"></div>
<div class="t" style="left:3035.0px;top:603.2px;height:32.5px;line-height:32.5px;font-size:18px;color:#707070;font-weight:400;">Q3 2024</div>
<div class="a" style="left:1158px;top:635px;width:2214.5px;height:33px;overflow:hidden">
<div class="t" style="left:-22.5px;top:0;height:33px;line-height:33px;font-size:17.5px;color:#212121">Aug</div>
<div class="t" style="left:150.2px;top:0;height:33px;line-height:33px;font-size:17.5px;color:#212121">Sep</div>
<div class="t" style="left:322.9px;top:0;height:33px;line-height:33px;font-size:17.5px;color:#212121">Oct</div>
<div class="t" style="left:495.6px;top:0;height:33px;line-height:33px;font-size:17.5px;color:#212121">Nov</div>
<div class="t" style="left:668.2px;top:0;height:33px;line-height:33px;font-size:17.5px;color:#212121">Dec</div>
<div class="t" style="left:840.9px;top:0;height:33px;line-height:33px;font-size:17.5px;color:#212121">Jan</div>
<div class="t" style="left:1013.6px;top:0;height:33px;line-height:33px;font-size:17.5px;color:#212121">Feb</div>
<div class="t" style="left:1186.3px;top:0;height:33px;line-height:33px;font-size:17.5px;color:#212121">Mar</div>
<div class="t" style="left:1359.0px;top:0;height:33px;line-height:33px;font-size:17.5px;color:#212121">Apr</div>
<div class="t" style="left:1531.6px;top:0;height:33px;line-height:33px;font-size:17.5px;color:#212121">May</div>
<div class="t" style="left:1704.3px;top:0;height:33px;line-height:33px;font-size:17.5px;color:#212121">Jun</div>
<div class="t" style="left:1877.0px;top:0;height:33px;line-height:33px;font-size:17.5px;color:#212121">Jul</div>
<div class="t" style="left:2049.7px;top:0;height:33px;line-height:33px;font-size:17.5px;color:#212121">Aug</div>
</div>
<div class="a" style="left:1285.45px;top:635px;width:1.5px;height:33px;background:#dcdcdc;"></div>
<div class="a" style="left:1458.13px;top:635px;width:1.5px;height:33px;background:#dcdcdc;"></div>
<div class="a" style="left:1630.8100000000002px;top:635px;width:1.5px;height:33px;background:#dcdcdc;"></div>
<div class="a" style="left:1803.49px;top:635px;width:1.5px;height:33px;background:#dcdcdc;"></div>
<div class="a" style="left:1976.17px;top:635px;width:1.5px;height:33px;background:#dcdcdc;"></div>
<div class="a" style="left:2148.85px;top:635px;width:1.5px;height:33px;background:#dcdcdc;"></div>
<div class="a" style="left:2321.53px;top:635px;width:1.5px;height:33px;background:#dcdcdc;"></div>
<div class="a" style="left:2494.2099999999996px;top:635px;width:1.5px;height:33px;background:#dcdcdc;"></div>
<div class="a" style="left:2666.89px;top:635px;width:1.5px;height:33px;background:#dcdcdc;"></div>
<div class="a" style="left:2839.57px;top:635px;width:1.5px;height:33px;background:#dcdcdc;"></div>
<div class="a" style="left:3012.25px;top:635px;width:1.5px;height:33px;background:#dcdcdc;"></div>
<div class="a" style="left:3184.93px;top:635px;width:1.5px;height:33px;background:#dcdcdc;"></div>
<div class="a" style="left:3357.61px;top:635px;width:1.5px;height:33px;background:#dcdcdc;"></div>
<div class="a" style="left:512px;top:668.6px;width:2860.5px;height:31.8px;background:#115868;"></div>
<div class="t" style="left:533px;top:668px;height:32.5px;line-height:32.5px;font-size:18px;color:#ffffff;font-weight:400;-webkit-text-stroke:0.25px #fff;letter-spacing:-0.38px">1002<span style="letter-spacing:-2.2px">__</span>&#8203;TURTLE BROWNIES</div>
<div class="a" style="left:512px;top:700.5px;width:2860.5px;height:31.5px;background:#efefef;"></div>
<div class="a" style="left:512px;top:731px;width:2860.5px;height:1.5px;background:#d9d9d9;"></div>
<svg style="left:527px;top:711px" width="17" height="17" viewBox="0 0 17 17"><path d="M2.5 1 H14.5 Q16 1 16 2.5 V10 Q16 11.5 14.5 11.5 H8 L4.5 15.5 V11.5 H2.5 Q1 11.5 1 10 V2.5 Q1 1 2.5 1Z" stroke="#8a8a8a" stroke-width="1.3" fill="none"/><path d="M4.5 5 H12.5 M4.5 8 H10" stroke="#8a8a8a" stroke-width="1.3"/></svg>
<div class="t" style="left:561px;top:701px;height:31.5px;line-height:31.5px;font-size:18.6px;color:#808080;font-weight:400;">Comments</div>
<div class="a" style="left:1156.5px;top:700.5px;width:1.5px;height:31.5px;background:#dcdcdc;"></div>
<div class="a" style="left:1285.45px;top:700.5px;width:1.5px;height:31.5px;background:#dcdcdc;"></div>
<div class="a" style="left:1458.13px;top:700.5px;width:1.5px;height:31.5px;background:#dcdcdc;"></div>
<div class="a" style="left:1630.8100000000002px;top:700.5px;width:1.5px;height:31.5px;background:#dcdcdc;"></div>
<div class="a" style="left:1803.49px;top:700.5px;width:1.5px;height:31.5px;background:#dcdcdc;"></div>
<div class="a" style="left:1976.17px;top:700.5px;width:1.5px;height:31.5px;background:#dcdcdc;"></div>
<div class="a" style="left:2148.85px;top:700.5px;width:1.5px;height:31.5px;background:#dcdcdc;"></div>
<div class="a" style="left:2321.53px;top:700.5px;width:1.5px;height:31.5px;background:#dcdcdc;"></div>
<div class="a" style="left:2494.2099999999996px;top:700.5px;width:1.5px;height:31.5px;background:#dcdcdc;"></div>
<div class="a" style="left:2666.89px;top:700.5px;width:1.5px;height:31.5px;background:#dcdcdc;"></div>
<div class="a" style="left:2839.57px;top:700.5px;width:1.5px;height:31.5px;background:#dcdcdc;"></div>
<div class="a" style="left:3012.25px;top:700.5px;width:1.5px;height:31.5px;background:#dcdcdc;"></div>
<div class="a" style="left:3184.93px;top:700.5px;width:1.5px;height:31.5px;background:#dcdcdc;"></div>
<div class="a" style="left:3357.61px;top:700.5px;width:1.5px;height:31.5px;background:#dcdcdc;"></div>
<div class="a" style="left:512px;top:732.3px;width:47px;height:53.03px;background:#e6fbf5;"></div>
<div class="a" style="left:513px;top:732.3px;width:5px;height:53.03px;background:#1cdcb0;"></div>
<div class="a" style="left:1157.5px;top:732.3px;width:2200.9px;height:53.03px;background:#e8f6fd;"></div>
<div class="a" style="left:3358.4px;top:732.3px;width:14.099999999999909px;height:53.03px;background:#ffffff;"></div>
<div class="a" style="left:512px;top:785.3299999999999px;width:47px;height:53.03px;background:#f7f9ec;"></div>
<div class="a" style="left:513px;top:785.3299999999999px;width:5px;height:53.03px;background:#c9d45c;"></div>
<div class="a" style="left:1157.5px;top:785.3299999999999px;width:2200.9px;height:53.03px;background:#e8f6fd;"></div>
<div class="a" style="left:3358.4px;top:785.3299999999999px;width:14.099999999999909px;height:53.03px;background:#fdf7e4;"></div>
<div class="a" style="left:512px;top:838.3599999999999px;width:47px;height:53.03px;background:#ecf8f1;"></div>
<div class="a" style="left:513px;top:838.3599999999999px;width:5px;height:53.03px;background:#7fd59f;"></div>
<div class="a" style="left:1157.5px;top:838.3599999999999px;width:2200.9px;height:53.03px;background:#e8f6fd;"></div>
<div class="a" style="left:3358.4px;top:838.3599999999999px;width:14.099999999999909px;height:53.03px;background:#ffffff;"></div>
<div class="a" style="left:512px;top:891.39px;width:47px;height:53.03px;background:#f2eefb;"></div>
<div class="a" style="left:513px;top:891.39px;width:5px;height:53.03px;background:#a582e0;"></div>
<div class="a" style="left:1157.5px;top:891.39px;width:2200.9px;height:53.03px;background:#e8f6fd;"></div>
<div class="a" style="left:3358.4px;top:891.39px;width:14.099999999999909px;height:53.03px;background:#ffffff;"></div>
<div class="a" style="left:512px;top:944.42px;width:47px;height:53.03px;background:#eff6ea;"></div>
<div class="a" style="left:513px;top:944.42px;width:5px;height:53.03px;background:#7ab74a;"></div>
<div class="a" style="left:1157.5px;top:944.42px;width:2200.9px;height:53.03px;background:#e8f6fd;"></div>
<div class="a" style="left:3358.4px;top:944.42px;width:14.099999999999909px;height:53.03px;background:#ffffff;"></div>
<div class="a" style="left:512px;top:997.4499999999999px;width:47px;height:53.03px;background:#faf7fd;"></div>
<div class="a" style="left:513px;top:997.4499999999999px;width:5px;height:53.03px;background:#e2c7f4;"></div>
<div class="a" style="left:1157.5px;top:997.4499999999999px;width:2200.9px;height:53.03px;background:#e8f6fd;"></div>
<div class="a" style="left:3358.4px;top:997.4499999999999px;width:14.099999999999909px;height:53.03px;background:#ffffff;"></div>
<div class="a" style="left:559px;top:784.7299999999999px;width:2813.5px;height:1.2px;background:#dcdcdc;"></div>
<div class="a" style="left:558.6px;top:732.3px;width:1.2px;height:53.03px;background:#e4e4e4;"></div>
<div class="a" style="left:1024.2px;top:732.3px;width:1.3px;height:53.03px;background:#dedede;"></div>
<div class="a" style="left:1156.8px;top:732.3px;width:1.3px;height:53.03px;background:#d9d9d9;"></div>
<div class="a" style="left:1285.55px;top:732.3px;width:1.3px;height:53.03px;background:#d9d9d9;"></div>
<div class="a" style="left:1458.23px;top:732.3px;width:1.3px;height:53.03px;background:#d9d9d9;"></div>
<div class="a" style="left:1630.91px;top:732.3px;width:1.3px;height:53.03px;background:#d9d9d9;"></div>
<div class="a" style="left:1803.59px;top:732.3px;width:1.3px;height:53.03px;background:#d9d9d9;"></div>
<div class="a" style="left:1976.27px;top:732.3px;width:1.3px;height:53.03px;background:#d9d9d9;"></div>
<div class="a" style="left:2148.95px;top:732.3px;width:1.3px;height:53.03px;background:#d9d9d9;"></div>
<div class="a" style="left:2321.63px;top:732.3px;width:1.3px;height:53.03px;background:#d9d9d9;"></div>
<div class="a" style="left:2494.3099999999995px;top:732.3px;width:1.3px;height:53.03px;background:#d9d9d9;"></div>
<div class="a" style="left:2666.99px;top:732.3px;width:1.3px;height:53.03px;background:#d9d9d9;"></div>
<div class="a" style="left:2839.67px;top:732.3px;width:1.3px;height:53.03px;background:#d9d9d9;"></div>
<div class="a" style="left:3012.35px;top:732.3px;width:1.3px;height:53.03px;background:#d9d9d9;"></div>
<div class="a" style="left:3185.0299999999997px;top:732.3px;width:1.3px;height:53.03px;background:#d9d9d9;"></div>
<div class="a" style="left:3357.71px;top:732.3px;width:1.3px;height:53.03px;background:#d9d9d9;"></div>
<div class="a" style="left:559px;top:837.7599999999999px;width:2813.5px;height:1.2px;background:#dcdcdc;"></div>
<div class="a" style="left:558.6px;top:785.3299999999999px;width:1.2px;height:53.03px;background:#e4e4e4;"></div>
<div class="a" style="left:1024.2px;top:785.3299999999999px;width:1.3px;height:53.03px;background:#dedede;"></div>
<div class="a" style="left:1156.8px;top:785.3299999999999px;width:1.3px;height:53.03px;background:#d9d9d9;"></div>
<div class="a" style="left:1285.55px;top:785.3299999999999px;width:1.3px;height:53.03px;background:#d9d9d9;"></div>
<div class="a" style="left:1458.23px;top:785.3299999999999px;width:1.3px;height:53.03px;background:#d9d9d9;"></div>
<div class="a" style="left:1630.91px;top:785.3299999999999px;width:1.3px;height:53.03px;background:#d9d9d9;"></div>
<div class="a" style="left:1803.59px;top:785.3299999999999px;width:1.3px;height:53.03px;background:#d9d9d9;"></div>
<div class="a" style="left:1976.27px;top:785.3299999999999px;width:1.3px;height:53.03px;background:#d9d9d9;"></div>
<div class="a" style="left:2148.95px;top:785.3299999999999px;width:1.3px;height:53.03px;background:#d9d9d9;"></div>
<div class="a" style="left:2321.63px;top:785.3299999999999px;width:1.3px;height:53.03px;background:#d9d9d9;"></div>
<div class="a" style="left:2494.3099999999995px;top:785.3299999999999px;width:1.3px;height:53.03px;background:#d9d9d9;"></div>
<div class="a" style="left:2666.99px;top:785.3299999999999px;width:1.3px;height:53.03px;background:#d9d9d9;"></div>
<div class="a" style="left:2839.67px;top:785.3299999999999px;width:1.3px;height:53.03px;background:#d9d9d9;"></div>
<div class="a" style="left:3012.35px;top:785.3299999999999px;width:1.3px;height:53.03px;background:#d9d9d9;"></div>
<div class="a" style="left:3185.0299999999997px;top:785.3299999999999px;width:1.3px;height:53.03px;background:#d9d9d9;"></div>
<div class="a" style="left:3357.71px;top:785.3299999999999px;width:1.3px;height:53.03px;background:#d9d9d9;"></div>
<div class="a" style="left:559px;top:890.7899999999998px;width:2813.5px;height:1.2px;background:#dcdcdc;"></div>
<div class="a" style="left:558.6px;top:838.3599999999999px;width:1.2px;height:53.03px;background:#e4e4e4;"></div>
<div class="a" style="left:1024.2px;top:838.3599999999999px;width:1.3px;height:53.03px;background:#dedede;"></div>
<div class="a" style="left:1156.8px;top:838.3599999999999px;width:1.3px;height:53.03px;background:#d9d9d9;"></div>
<div class="a" style="left:1285.55px;top:838.3599999999999px;width:1.3px;height:53.03px;background:#d9d9d9;"></div>
<div class="a" style="left:1458.23px;top:838.3599999999999px;width:1.3px;height:53.03px;background:#d9d9d9;"></div>
<div class="a" style="left:1630.91px;top:838.3599999999999px;width:1.3px;height:53.03px;background:#d9d9d9;"></div>
<div class="a" style="left:1803.59px;top:838.3599999999999px;width:1.3px;height:53.03px;background:#d9d9d9;"></div>
<div class="a" style="left:1976.27px;top:838.3599999999999px;width:1.3px;height:53.03px;background:#d9d9d9;"></div>
<div class="a" style="left:2148.95px;top:838.3599999999999px;width:1.3px;height:53.03px;background:#d9d9d9;"></div>
<div class="a" style="left:2321.63px;top:838.3599999999999px;width:1.3px;height:53.03px;background:#d9d9d9;"></div>
<div class="a" style="left:2494.3099999999995px;top:838.3599999999999px;width:1.3px;height:53.03px;background:#d9d9d9;"></div>
<div class="a" style="left:2666.99px;top:838.3599999999999px;width:1.3px;height:53.03px;background:#d9d9d9;"></div>
<div class="a" style="left:2839.67px;top:838.3599999999999px;width:1.3px;height:53.03px;background:#d9d9d9;"></div>
<div class="a" style="left:3012.35px;top:838.3599999999999px;width:1.3px;height:53.03px;background:#d9d9d9;"></div>
<div class="a" style="left:3185.0299999999997px;top:838.3599999999999px;width:1.3px;height:53.03px;background:#d9d9d9;"></div>
<div class="a" style="left:3357.71px;top:838.3599999999999px;width:1.3px;height:53.03px;background:#d9d9d9;"></div>
<div class="a" style="left:559px;top:943.8199999999999px;width:2813.5px;height:1.2px;background:#dcdcdc;"></div>
<div class="a" style="left:558.6px;top:891.39px;width:1.2px;height:53.03px;background:#e4e4e4;"></div>
<div class="a" style="left:1024.2px;top:891.39px;width:1.3px;height:53.03px;background:#dedede;"></div>
<div class="a" style="left:1156.8px;top:891.39px;width:1.3px;height:53.03px;background:#d9d9d9;"></div>
<div class="a" style="left:1285.55px;top:891.39px;width:1.3px;height:53.03px;background:#d9d9d9;"></div>
<div class="a" style="left:1458.23px;top:891.39px;width:1.3px;height:53.03px;background:#d9d9d9;"></div>
<div class="a" style="left:1630.91px;top:891.39px;width:1.3px;height:53.03px;background:#d9d9d9;"></div>
<div class="a" style="left:1803.59px;top:891.39px;width:1.3px;height:53.03px;background:#d9d9d9;"></div>
<div class="a" style="left:1976.27px;top:891.39px;width:1.3px;height:53.03px;background:#d9d9d9;"></div>
<div class="a" style="left:2148.95px;top:891.39px;width:1.3px;height:53.03px;background:#d9d9d9;"></div>
<div class="a" style="left:2321.63px;top:891.39px;width:1.3px;height:53.03px;background:#d9d9d9;"></div>
<div class="a" style="left:2494.3099999999995px;top:891.39px;width:1.3px;height:53.03px;background:#d9d9d9;"></div>
<div class="a" style="left:2666.99px;top:891.39px;width:1.3px;height:53.03px;background:#d9d9d9;"></div>
<div class="a" style="left:2839.67px;top:891.39px;width:1.3px;height:53.03px;background:#d9d9d9;"></div>
<div class="a" style="left:3012.35px;top:891.39px;width:1.3px;height:53.03px;background:#d9d9d9;"></div>
<div class="a" style="left:3185.0299999999997px;top:891.39px;width:1.3px;height:53.03px;background:#d9d9d9;"></div>
<div class="a" style="left:3357.71px;top:891.39px;width:1.3px;height:53.03px;background:#d9d9d9;"></div>
<div class="a" style="left:559px;top:996.8499999999999px;width:2813.5px;height:1.2px;background:#dcdcdc;"></div>
<div class="a" style="left:558.6px;top:944.42px;width:1.2px;height:53.03px;background:#e4e4e4;"></div>
<div class="a" style="left:1024.2px;top:944.42px;width:1.3px;height:53.03px;background:#dedede;"></div>
<div class="a" style="left:1156.8px;top:944.42px;width:1.3px;height:53.03px;background:#d9d9d9;"></div>
<div class="a" style="left:1285.55px;top:944.42px;width:1.3px;height:53.03px;background:#d9d9d9;"></div>
<div class="a" style="left:1458.23px;top:944.42px;width:1.3px;height:53.03px;background:#d9d9d9;"></div>
<div class="a" style="left:1630.91px;top:944.42px;width:1.3px;height:53.03px;background:#d9d9d9;"></div>
<div class="a" style="left:1803.59px;top:944.42px;width:1.3px;height:53.03px;background:#d9d9d9;"></div>
<div class="a" style="left:1976.27px;top:944.42px;width:1.3px;height:53.03px;background:#d9d9d9;"></div>
<div class="a" style="left:2148.95px;top:944.42px;width:1.3px;height:53.03px;background:#d9d9d9;"></div>
<div class="a" style="left:2321.63px;top:944.42px;width:1.3px;height:53.03px;background:#d9d9d9;"></div>
<div class="a" style="left:2494.3099999999995px;top:944.42px;width:1.3px;height:53.03px;background:#d9d9d9;"></div>
<div class="a" style="left:2666.99px;top:944.42px;width:1.3px;height:53.03px;background:#d9d9d9;"></div>
<div class="a" style="left:2839.67px;top:944.42px;width:1.3px;height:53.03px;background:#d9d9d9;"></div>
<div class="a" style="left:3012.35px;top:944.42px;width:1.3px;height:53.03px;background:#d9d9d9;"></div>
<div class="a" style="left:3185.0299999999997px;top:944.42px;width:1.3px;height:53.03px;background:#d9d9d9;"></div>
<div class="a" style="left:3357.71px;top:944.42px;width:1.3px;height:53.03px;background:#d9d9d9;"></div>
<div class="a" style="left:559px;top:1049.88px;width:2813.5px;height:1.2px;background:#dcdcdc;"></div>
<div class="a" style="left:558.6px;top:997.4499999999999px;width:1.2px;height:53.03px;background:#e4e4e4;"></div>
<div class="a" style="left:1024.2px;top:997.4499999999999px;width:1.3px;height:53.03px;background:#dedede;"></div>
<div class="a" style="left:1156.8px;top:997.4499999999999px;width:1.3px;height:53.03px;background:#d9d9d9;"></div>
<div class="a" style="left:1285.55px;top:997.4499999999999px;width:1.3px;height:53.03px;background:#d9d9d9;"></div>
<div class="a" style="left:1458.23px;top:997.4499999999999px;width:1.3px;height:53.03px;background:#d9d9d9;"></div>
<div class="a" style="left:1630.91px;top:997.4499999999999px;width:1.3px;height:53.03px;background:#d9d9d9;"></div>
<div class="a" style="left:1803.59px;top:997.4499999999999px;width:1.3px;height:53.03px;background:#d9d9d9;"></div>
<div class="a" style="left:1976.27px;top:997.4499999999999px;width:1.3px;height:53.03px;background:#d9d9d9;"></div>
<div class="a" style="left:2148.95px;top:997.4499999999999px;width:1.3px;height:53.03px;background:#d9d9d9;"></div>
<div class="a" style="left:2321.63px;top:997.4499999999999px;width:1.3px;height:53.03px;background:#d9d9d9;"></div>
<div class="a" style="left:2494.3099999999995px;top:997.4499999999999px;width:1.3px;height:53.03px;background:#d9d9d9;"></div>
<div class="a" style="left:2666.99px;top:997.4499999999999px;width:1.3px;height:53.03px;background:#d9d9d9;"></div>
<div class="a" style="left:2839.67px;top:997.4499999999999px;width:1.3px;height:53.03px;background:#d9d9d9;"></div>
<div class="a" style="left:3012.35px;top:997.4499999999999px;width:1.3px;height:53.03px;background:#d9d9d9;"></div>
<div class="a" style="left:3185.0299999999997px;top:997.4499999999999px;width:1.3px;height:53.03px;background:#d9d9d9;"></div>
<div class="a" style="left:3357.71px;top:997.4499999999999px;width:1.3px;height:53.03px;background:#d9d9d9;"></div>
<svg style="left:527.5px;top:750.8px" width="17" height="17" viewBox="0 0 17 17"><rect x="0.9" y="0.9" width="15.2" height="15.2" rx="1.5" stroke="#333" stroke-width="1.6" fill="none"/><path d="M4.3 8.5 H12.7 M8.5 4.3 V12.7" stroke="#333" stroke-width="1.6"/></svg>
<div class="t" style="left:581px;top:732.3px;height:53.03px;line-height:53.03px;font-size:18.75px;color:#212121;font-weight:400;">Statistical Forecast</div>
<div class="t" style="left:1046px;top:732.3px;height:53.03px;line-height:53.03px;font-size:18.5px;color:#212121;font-weight:400;">kg</div>
<div class="t" style="right:2117.3px;top:732.3px;height:53.03px;line-height:53.03px;font-size:17.8px;color:#212121;font-weight:400;text-align:right;">27,237</div>
<div class="t" style="right:1944.62px;top:732.3px;height:53.03px;line-height:53.03px;font-size:17.8px;color:#212121;font-weight:400;text-align:right;">24,554</div>
<div class="t" style="right:1771.9399999999998px;top:732.3px;height:53.03px;line-height:53.03px;font-size:17.8px;color:#212121;font-weight:400;text-align:right;">22,269</div>
<div class="t" style="right:1599.26px;top:732.3px;height:53.03px;line-height:53.03px;font-size:17.8px;color:#212121;font-weight:400;text-align:right;">21,843</div>
<div class="t" style="right:1426.58px;top:732.3px;height:53.03px;line-height:53.03px;font-size:17.8px;color:#212121;font-weight:400;text-align:right;">23,714</div>
<div class="t" style="right:1253.9px;top:732.3px;height:53.03px;line-height:53.03px;font-size:17.8px;color:#212121;font-weight:400;text-align:right;">23,008</div>
<div class="t" style="right:1081.2199999999998px;top:732.3px;height:53.03px;line-height:53.03px;font-size:17.8px;color:#212121;font-weight:400;text-align:right;">23,098</div>
<div class="t" style="right:908.5400000000004px;top:732.3px;height:53.03px;line-height:53.03px;font-size:17.8px;color:#212121;font-weight:400;text-align:right;">22,547</div>
<div class="t" style="right:735.8600000000001px;top:732.3px;height:53.03px;line-height:53.03px;font-size:17.8px;color:#212121;font-weight:400;text-align:right;">23,932</div>
<div class="t" style="right:563.1799999999998px;top:732.3px;height:53.03px;line-height:53.03px;font-size:17.8px;color:#212121;font-weight:400;text-align:right;">23,112</div>
<div class="t" style="right:390.5px;top:732.3px;height:53.03px;line-height:53.03px;font-size:17.8px;color:#212121;font-weight:400;text-align:right;">21,010</div>
<div class="t" style="right:217.82000000000016px;top:732.3px;height:53.03px;line-height:53.03px;font-size:17.8px;color:#212121;font-weight:400;text-align:right;">22,326</div>
<div class="t" style="right:45.13999999999987px;top:732.3px;height:53.03px;line-height:53.03px;font-size:17.8px;color:#212121;font-weight:400;text-align:right;">23,419</div>
<svg style="left:527.5px;top:803.8px" width="17" height="17" viewBox="0 0 17 17"><rect x="0.9" y="0.9" width="15.2" height="15.2" rx="1.5" stroke="#333" stroke-width="1.6" fill="none"/><path d="M4.3 8.5 H12.7 M8.5 4.3 V12.7" stroke="#333" stroke-width="1.6"/></svg>
<div class="t" style="left:581px;top:785.3299999999999px;height:53.03px;line-height:53.03px;font-size:18.75px;color:#212121;font-weight:400;">Launch Volume</div>
<div class="t" style="left:1046px;top:785.3299999999999px;height:53.03px;line-height:53.03px;font-size:18.5px;color:#212121;font-weight:400;">kg</div>
<div class="t" style="right:2117.3px;top:785.3299999999999px;height:53.03px;line-height:53.03px;font-size:17.8px;color:#212121;font-weight:400;text-align:right;">0</div>
<div class="t" style="right:1944.62px;top:785.3299999999999px;height:53.03px;line-height:53.03px;font-size:17.8px;color:#212121;font-weight:400;text-align:right;">0</div>
<div class="t" style="right:1771.9399999999998px;top:785.3299999999999px;height:53.03px;line-height:53.03px;font-size:17.8px;color:#212121;font-weight:400;text-align:right;">0</div>
<div class="t" style="right:1599.26px;top:785.3299999999999px;height:53.03px;line-height:53.03px;font-size:17.8px;color:#212121;font-weight:400;text-align:right;">0</div>
<div class="t" style="right:1426.58px;top:785.3299999999999px;height:53.03px;line-height:53.03px;font-size:17.8px;color:#212121;font-weight:400;text-align:right;">0</div>
<div class="t" style="right:1253.9px;top:785.3299999999999px;height:53.03px;line-height:53.03px;font-size:17.8px;color:#212121;font-weight:400;text-align:right;">0</div>
<div class="t" style="right:1081.2199999999998px;top:785.3299999999999px;height:53.03px;line-height:53.03px;font-size:17.8px;color:#212121;font-weight:400;text-align:right;">0</div>
<div class="t" style="right:908.5400000000004px;top:785.3299999999999px;height:53.03px;line-height:53.03px;font-size:17.8px;color:#212121;font-weight:400;text-align:right;">0</div>
<div class="t" style="right:735.8600000000001px;top:785.3299999999999px;height:53.03px;line-height:53.03px;font-size:17.8px;color:#212121;font-weight:400;text-align:right;">0</div>
<div class="t" style="right:563.1799999999998px;top:785.3299999999999px;height:53.03px;line-height:53.03px;font-size:17.8px;color:#212121;font-weight:400;text-align:right;">0</div>
<div class="t" style="right:390.5px;top:785.3299999999999px;height:53.03px;line-height:53.03px;font-size:17.8px;color:#212121;font-weight:400;text-align:right;">0</div>
<div class="t" style="right:217.82000000000016px;top:785.3299999999999px;height:53.03px;line-height:53.03px;font-size:17.8px;color:#212121;font-weight:400;text-align:right;">0</div>
<div class="t" style="right:45.13999999999987px;top:785.3299999999999px;height:53.03px;line-height:53.03px;font-size:17.8px;color:#212121;font-weight:400;text-align:right;">0</div>
<svg style="left:527.5px;top:856.9px" width="17" height="17" viewBox="0 0 17 17"><rect x="0.9" y="0.9" width="15.2" height="15.2" rx="1.5" stroke="#333" stroke-width="1.6" fill="none"/><path d="M4.3 8.5 H12.7 M8.5 4.3 V12.7" stroke="#333" stroke-width="1.6"/></svg>
<div class="t" style="left:581px;top:838.3599999999999px;height:53.03px;line-height:53.03px;font-size:18.75px;color:#212121;font-weight:400;">Promotion Volume</div>
<div class="t" style="left:1046px;top:838.3599999999999px;height:53.03px;line-height:53.03px;font-size:18.5px;color:#212121;font-weight:400;">kg</div>
<div class="t" style="right:2117.3px;top:838.3599999999999px;height:53.03px;line-height:53.03px;font-size:17.8px;color:#212121;font-weight:400;text-align:right;">0</div>
<div class="t" style="right:1944.62px;top:838.3599999999999px;height:53.03px;line-height:53.03px;font-size:17.8px;color:#212121;font-weight:400;text-align:right;">0</div>
<div class="t" style="right:1771.9399999999998px;top:838.3599999999999px;height:53.03px;line-height:53.03px;font-size:17.8px;color:#212121;font-weight:400;text-align:right;">0</div>
<div class="t" style="right:1599.26px;top:838.3599999999999px;height:53.03px;line-height:53.03px;font-size:17.8px;color:#212121;font-weight:400;text-align:right;">0</div>
<div class="t" style="right:1426.58px;top:838.3599999999999px;height:53.03px;line-height:53.03px;font-size:17.8px;color:#212121;font-weight:400;text-align:right;">0</div>
<div class="t" style="right:1253.9px;top:838.3599999999999px;height:53.03px;line-height:53.03px;font-size:17.8px;color:#212121;font-weight:400;text-align:right;">0</div>
<div class="t" style="right:1081.2199999999998px;top:838.3599999999999px;height:53.03px;line-height:53.03px;font-size:17.8px;color:#212121;font-weight:400;text-align:right;">0</div>
<div class="t" style="right:908.5400000000004px;top:838.3599999999999px;height:53.03px;line-height:53.03px;font-size:17.8px;color:#212121;font-weight:400;text-align:right;">0</div>
<div class="t" style="right:735.8600000000001px;top:838.3599999999999px;height:53.03px;line-height:53.03px;font-size:17.8px;color:#212121;font-weight:400;text-align:right;">0</div>
<div class="t" style="right:563.1799999999998px;top:838.3599999999999px;height:53.03px;line-height:53.03px;font-size:17.8px;color:#212121;font-weight:400;text-align:right;">0</div>
<div class="t" style="right:390.5px;top:838.3599999999999px;height:53.03px;line-height:53.03px;font-size:17.8px;color:#212121;font-weight:400;text-align:right;">0</div>
<div class="t" style="right:217.82000000000016px;top:838.3599999999999px;height:53.03px;line-height:53.03px;font-size:17.8px;color:#212121;font-weight:400;text-align:right;">0</div>
<div class="t" style="right:45.13999999999987px;top:838.3599999999999px;height:53.03px;line-height:53.03px;font-size:17.8px;color:#212121;font-weight:400;text-align:right;">0</div>
<svg style="left:527.5px;top:909.9px" width="17" height="17" viewBox="0 0 17 17"><rect x="0.9" y="0.9" width="15.2" height="15.2" rx="1.5" stroke="#333" stroke-width="1.6" fill="none"/><path d="M4.3 8.5 H12.7 M8.5 4.3 V12.7" stroke="#333" stroke-width="1.6"/></svg>
<div class="t" style="left:581px;top:891.39px;height:53.03px;line-height:53.03px;font-size:18.75px;color:#212121;font-weight:400;">End Of Life Volume</div>
<div class="t" style="left:1046px;top:891.39px;height:53.03px;line-height:53.03px;font-size:18.5px;color:#212121;font-weight:400;">kg</div>
<div class="t" style="right:2117.3px;top:891.39px;height:53.03px;line-height:53.03px;font-size:17.8px;color:#212121;font-weight:400;text-align:right;">0</div>
<div class="t" style="right:1944.62px;top:891.39px;height:53.03px;line-height:53.03px;font-size:17.8px;color:#212121;font-weight:400;text-align:right;">0</div>
<div class="t" style="right:1771.9399999999998px;top:891.39px;height:53.03px;line-height:53.03px;font-size:17.8px;color:#212121;font-weight:400;text-align:right;">0</div>
<div class="t" style="right:1599.26px;top:891.39px;height:53.03px;line-height:53.03px;font-size:17.8px;color:#212121;font-weight:400;text-align:right;">0</div>
<div class="t" style="right:1426.58px;top:891.39px;height:53.03px;line-height:53.03px;font-size:17.8px;color:#212121;font-weight:400;text-align:right;">0</div>
<div class="t" style="right:1253.9px;top:891.39px;height:53.03px;line-height:53.03px;font-size:17.8px;color:#212121;font-weight:400;text-align:right;">0</div>
<div class="t" style="right:1081.2199999999998px;top:891.39px;height:53.03px;line-height:53.03px;font-size:17.8px;color:#212121;font-weight:400;text-align:right;">0</div>
<div class="t" style="right:908.5400000000004px;top:891.39px;height:53.03px;line-height:53.03px;font-size:17.8px;color:#212121;font-weight:400;text-align:right;">0</div>
<div class="t" style="right:735.8600000000001px;top:891.39px;height:53.03px;line-height:53.03px;font-size:17.8px;color:#212121;font-weight:400;text-align:right;">0</div>
<div class="t" style="right:563.1799999999998px;top:891.39px;height:53.03px;line-height:53.03px;font-size:17.8px;color:#212121;font-weight:400;text-align:right;">0</div>
<div class="t" style="right:390.5px;top:891.39px;height:53.03px;line-height:53.03px;font-size:17.8px;color:#212121;font-weight:400;text-align:right;">0</div>
<div class="t" style="right:217.82000000000016px;top:891.39px;height:53.03px;line-height:53.03px;font-size:17.8px;color:#212121;font-weight:400;text-align:right;">0</div>
<div class="t" style="right:45.13999999999987px;top:891.39px;height:53.03px;line-height:53.03px;font-size:17.8px;color:#212121;font-weight:400;text-align:right;">0</div>
<svg style="left:527.5px;top:962.9px" width="17" height="17" viewBox="0 0 17 17"><rect x="0.9" y="0.9" width="15.2" height="15.2" rx="1.5" stroke="#333" stroke-width="1.6" fill="none"/><path d="M4.3 8.5 H12.7 M8.5 4.3 V12.7" stroke="#333" stroke-width="1.6"/></svg>
<div class="t" style="left:581px;top:944.42px;height:53.03px;line-height:53.03px;font-size:18.75px;color:#212121;font-weight:400;">Realignment Volume</div>
<div class="t" style="left:1046px;top:944.42px;height:53.03px;line-height:53.03px;font-size:18.5px;color:#212121;font-weight:400;">kg</div>
<div class="t" style="right:2117.3px;top:944.42px;height:53.03px;line-height:53.03px;font-size:17.8px;color:#212121;font-weight:400;text-align:right;">0</div>
<div class="t" style="right:1944.62px;top:944.42px;height:53.03px;line-height:53.03px;font-size:17.8px;color:#212121;font-weight:400;text-align:right;">0</div>
<div class="t" style="right:1771.9399999999998px;top:944.42px;height:53.03px;line-height:53.03px;font-size:17.8px;color:#212121;font-weight:400;text-align:right;">0</div>
<div class="t" style="right:1599.26px;top:944.42px;height:53.03px;line-height:53.03px;font-size:17.8px;color:#212121;font-weight:400;text-align:right;">0</div>
<div class="t" style="right:1426.58px;top:944.42px;height:53.03px;line-height:53.03px;font-size:17.8px;color:#212121;font-weight:400;text-align:right;">0</div>
<div class="t" style="right:1253.9px;top:944.42px;height:53.03px;line-height:53.03px;font-size:17.8px;color:#212121;font-weight:400;text-align:right;">0</div>
<div class="t" style="right:1081.2199999999998px;top:944.42px;height:53.03px;line-height:53.03px;font-size:17.8px;color:#212121;font-weight:400;text-align:right;">0</div>
<div class="t" style="right:908.5400000000004px;top:944.42px;height:53.03px;line-height:53.03px;font-size:17.8px;color:#212121;font-weight:400;text-align:right;">0</div>
<div class="t" style="right:735.8600000000001px;top:944.42px;height:53.03px;line-height:53.03px;font-size:17.8px;color:#212121;font-weight:400;text-align:right;">0</div>
<div class="t" style="right:563.1799999999998px;top:944.42px;height:53.03px;line-height:53.03px;font-size:17.8px;color:#212121;font-weight:400;text-align:right;">0</div>
<div class="t" style="right:390.5px;top:944.42px;height:53.03px;line-height:53.03px;font-size:17.8px;color:#212121;font-weight:400;text-align:right;">0</div>
<div class="t" style="right:217.82000000000016px;top:944.42px;height:53.03px;line-height:53.03px;font-size:17.8px;color:#212121;font-weight:400;text-align:right;">0</div>
<div class="t" style="right:45.13999999999987px;top:944.42px;height:53.03px;line-height:53.03px;font-size:17.8px;color:#212121;font-weight:400;text-align:right;">0</div>
<svg style="left:527.5px;top:1016.0px" width="17" height="17" viewBox="0 0 17 17"><rect x="0.9" y="0.9" width="15.2" height="15.2" rx="1.5" stroke="#333" stroke-width="1.6" fill="none"/><path d="M4.3 8.5 H12.7 M8.5 4.3 V12.7" stroke="#333" stroke-width="1.6"/></svg>
<div class="t" style="left:581px;top:997.4499999999999px;height:53.03px;line-height:53.03px;font-size:18.75px;color:#212121;font-weight:400;">Statistical Forecast Including Events</div>
<div class="t" style="left:1046px;top:997.4499999999999px;height:53.03px;line-height:53.03px;font-size:18.5px;color:#212121;font-weight:400;">kg</div>
<div class="t" style="right:2117.3px;top:997.4499999999999px;height:53.03px;line-height:53.03px;font-size:17.8px;color:#212121;font-weight:400;text-align:right;">27,237</div>
<div class="t" style="right:1944.62px;top:997.4499999999999px;height:53.03px;line-height:53.03px;font-size:17.8px;color:#212121;font-weight:400;text-align:right;">24,554</div>
<div class="t" style="right:1771.9399999999998px;top:997.4499999999999px;height:53.03px;line-height:53.03px;font-size:17.8px;color:#212121;font-weight:400;text-align:right;">22,269</div>
<div class="t" style="right:1599.26px;top:997.4499999999999px;height:53.03px;line-height:53.03px;font-size:17.8px;color:#212121;font-weight:400;text-align:right;">21,843</div>
<div class="t" style="right:1426.58px;top:997.4499999999999px;height:53.03px;line-height:53.03px;font-size:17.8px;color:#212121;font-weight:400;text-align:right;">23,714</div>
<div class="t" style="right:1253.9px;top:997.4499999999999px;height:53.03px;line-height:53.03px;font-size:17.8px;color:#212121;font-weight:400;text-align:right;">23,008</div>
<div class="t" style="right:1081.2199999999998px;top:997.4499999999999px;height:53.03px;line-height:53.03px;font-size:17.8px;color:#212121;font-weight:400;text-align:right;">23,098</div>
<div class="t" style="right:908.5400000000004px;top:997.4499999999999px;height:53.03px;line-height:53.03px;font-size:17.8px;color:#212121;font-weight:400;text-align:right;">22,547</div>
<div class="t" style="right:735.8600000000001px;top:997.4499999999999px;height:53.03px;line-height:53.03px;font-size:17.8px;color:#212121;font-weight:400;text-align:right;">23,932</div>
<div class="t" style="right:563.1799999999998px;top:997.4499999999999px;height:53.03px;line-height:53.03px;font-size:17.8px;color:#212121;font-weight:400;text-align:right;">23,112</div>
<div class="t" style="right:390.5px;top:997.4499999999999px;height:53.03px;line-height:53.03px;font-size:17.8px;color:#212121;font-weight:400;text-align:right;">21,010</div>
<div class="t" style="right:217.82000000000016px;top:997.4499999999999px;height:53.03px;line-height:53.03px;font-size:17.8px;color:#212121;font-weight:400;text-align:right;">22,326</div>
<div class="t" style="right:45.13999999999987px;top:997.4499999999999px;height:53.03px;line-height:53.03px;font-size:17.8px;color:#212121;font-weight:400;text-align:right;">23,419</div>
<div class="a" style="left:512px;top:1049.88px;width:47px;height:1.2px;background:#dcdcdc;"></div>
<div class="a" style="left:3185.8px;top:732.2px;width:173px;height:52px;border:2px solid #2f9be0"></div>
<div class="a" style="left:3371.5px;top:602.5px;width:1.2px;height:447.98px;background:#e0e0e0;"></div></body></html>
